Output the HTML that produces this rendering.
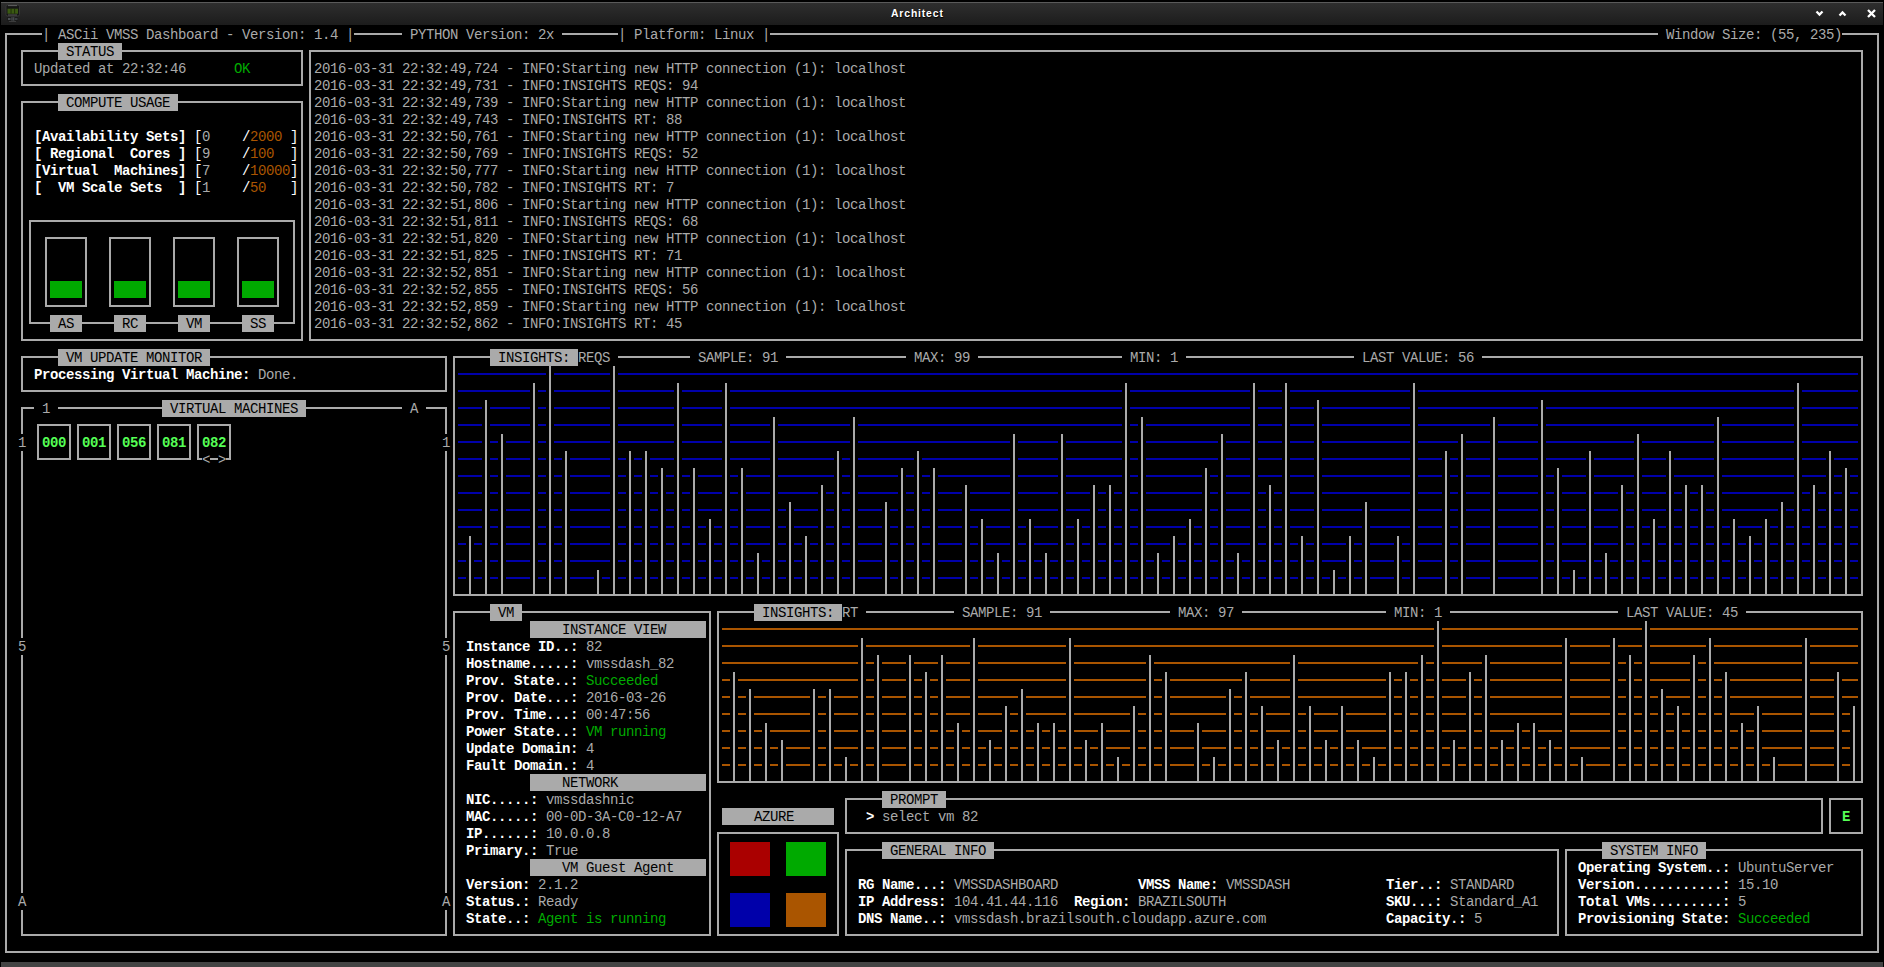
<!DOCTYPE html>
<html><head><meta charset="utf-8"><style>
html,body{margin:0;padding:0;background:#000;width:1884px;height:967px;overflow:hidden;position:relative}
i{position:absolute;display:block}
.b{height:17px}
.t{position:absolute;white-space:pre;font-family:"Liberation Mono",monospace;font-size:14.000px;letter-spacing:-0.4013px;line-height:17px;height:17px}
.b1{font-weight:bold}
#tb{position:absolute;left:1px;top:2px;width:1882px;height:23px;background:linear-gradient(#2f2f2f,#1c1c1c)}
#tbl{position:absolute;left:1px;top:2px;width:1882px;height:1px;background:#5a5a5a}
#ttl{position:absolute;left:891px;top:3px;white-space:pre;font-family:"Liberation Sans",sans-serif;font-weight:bold;font-size:10.4px;letter-spacing:0.85px;color:#ffffff;line-height:22px;text-shadow:0.5px 0.8px 0.8px #000}
#bb{position:absolute;left:1px;top:962px;width:1882px;height:5px;background:#444}
</style></head><body>
<div id="tb"></div><div id="tbl"></div>
<div id="ttl">Architect</div>
<svg style="position:absolute;left:0;top:0" width="1884" height="26">
<rect x="6" y="5" width="13.5" height="11" rx="1.5" fill="#161616" stroke="#3c3c3c" stroke-width="0.8"/>
<rect x="8" y="5.2" width="9" height="0.9" fill="#666"/>
<rect x="7.5" y="8.7" width="10.5" height="5" fill="#3b5a12"/>
<rect x="10.6" y="8.7" width="0.9" height="5" fill="#1d2a0a"/>
<rect x="14.2" y="8.7" width="0.9" height="5" fill="#1d2a0a"/>
<rect x="8" y="14.5" width="9" height="1" fill="#555"/>
<rect x="7" y="17" width="11" height="4" fill="#1a1a1a"/>
<rect x="8" y="18" width="2.5" height="2" fill="#4a4f52"/>
<rect x="11.5" y="17.2" width="1" height="3.5" fill="#5a5f62"/>
<rect x="13.3" y="17.2" width="1" height="3.5" fill="#5a5f62"/>
<rect x="15" y="18" width="2.5" height="2" fill="#3a3f42"/>
<rect x="9" y="21" width="7" height="0.8" fill="#444"/>
<path d="M1816.5 11.5 L1819.5 14.5 L1822.5 11.5" stroke="#fff" stroke-width="2.3" fill="none"/>
<path d="M1839.5 15.5 L1842.5 12.5 L1845.5 15.5" stroke="#fff" stroke-width="2.3" fill="none"/>
<path d="M1868 10 L1875 17 M1875 10 L1868 17" stroke="#fff" stroke-width="2.3" fill="none"/>
</svg>
<i class="b" style="left:58px;top:43px;width:64px;background:#aaaaaa"></i>
<i class="b" style="left:58px;top:94px;width:120px;background:#aaaaaa"></i>
<i class="b" style="left:50px;top:281px;width:32px;background:#00aa00"></i>
<i class="b" style="left:114px;top:281px;width:32px;background:#00aa00"></i>
<i class="b" style="left:178px;top:281px;width:32px;background:#00aa00"></i>
<i class="b" style="left:242px;top:281px;width:32px;background:#00aa00"></i>
<i class="b" style="left:50px;top:315px;width:32px;background:#aaaaaa"></i>
<i class="b" style="left:114px;top:315px;width:32px;background:#aaaaaa"></i>
<i class="b" style="left:178px;top:315px;width:32px;background:#aaaaaa"></i>
<i class="b" style="left:242px;top:315px;width:32px;background:#aaaaaa"></i>
<i class="b" style="left:58px;top:349px;width:152px;background:#aaaaaa"></i>
<i class="b" style="left:490px;top:349px;width:88px;background:#aaaaaa"></i>
<i class="b" style="left:162px;top:400px;width:144px;background:#aaaaaa"></i>
<i class="b" style="left:490px;top:604px;width:32px;background:#aaaaaa"></i>
<i class="b" style="left:754px;top:604px;width:88px;background:#aaaaaa"></i>
<i class="b" style="left:530px;top:621px;width:176px;background:#aaaaaa"></i>
<i class="b" style="left:530px;top:774px;width:176px;background:#aaaaaa"></i>
<i class="b" style="left:882px;top:791px;width:64px;background:#aaaaaa"></i>
<i class="b" style="left:722px;top:808px;width:112px;background:#aaaaaa"></i>
<i class="b" style="left:730px;top:842px;width:40px;background:#aa0000"></i>
<i class="b" style="left:786px;top:842px;width:40px;background:#00aa00"></i>
<i class="b" style="left:882px;top:842px;width:112px;background:#aaaaaa"></i>
<i class="b" style="left:1602px;top:842px;width:104px;background:#aaaaaa"></i>
<i class="b" style="left:530px;top:859px;width:176px;background:#aaaaaa"></i>
<i class="b" style="left:730px;top:859px;width:40px;background:#aa0000"></i>
<i class="b" style="left:786px;top:859px;width:40px;background:#00aa00"></i>
<i class="b" style="left:730px;top:893px;width:40px;background:#0000aa"></i>
<i class="b" style="left:786px;top:893px;width:40px;background:#aa5500"></i>
<i class="b" style="left:730px;top:910px;width:40px;background:#0000aa"></i>
<i class="b" style="left:786px;top:910px;width:40px;background:#aa5500"></i>
<i class="l" style="left:5px;top:33px;width:37px;height:2px;background:#aaaaaa"></i>
<i class="l" style="left:354px;top:33px;width:48px;height:2px;background:#aaaaaa"></i>
<i class="l" style="left:562px;top:33px;width:56px;height:2px;background:#aaaaaa"></i>
<i class="l" style="left:770px;top:33px;width:888px;height:2px;background:#aaaaaa"></i>
<i class="l" style="left:1842px;top:33px;width:37px;height:2px;background:#aaaaaa"></i>
<i class="l" style="left:21px;top:50px;width:37px;height:2px;background:#aaaaaa"></i>
<i class="l" style="left:122px;top:50px;width:181px;height:2px;background:#aaaaaa"></i>
<i class="l" style="left:309px;top:50px;width:1554px;height:2px;background:#aaaaaa"></i>
<i class="l" style="left:21px;top:84px;width:282px;height:2px;background:#aaaaaa"></i>
<i class="l" style="left:21px;top:101px;width:37px;height:2px;background:#aaaaaa"></i>
<i class="l" style="left:178px;top:101px;width:125px;height:2px;background:#aaaaaa"></i>
<i class="l" style="left:29px;top:220px;width:266px;height:2px;background:#aaaaaa"></i>
<i class="l" style="left:45px;top:237px;width:42px;height:2px;background:#aaaaaa"></i>
<i class="l" style="left:109px;top:237px;width:42px;height:2px;background:#aaaaaa"></i>
<i class="l" style="left:173px;top:237px;width:42px;height:2px;background:#aaaaaa"></i>
<i class="l" style="left:237px;top:237px;width:42px;height:2px;background:#aaaaaa"></i>
<i class="l" style="left:45px;top:305px;width:42px;height:2px;background:#aaaaaa"></i>
<i class="l" style="left:109px;top:305px;width:42px;height:2px;background:#aaaaaa"></i>
<i class="l" style="left:173px;top:305px;width:42px;height:2px;background:#aaaaaa"></i>
<i class="l" style="left:237px;top:305px;width:42px;height:2px;background:#aaaaaa"></i>
<i class="l" style="left:29px;top:322px;width:21px;height:2px;background:#aaaaaa"></i>
<i class="l" style="left:82px;top:322px;width:32px;height:2px;background:#aaaaaa"></i>
<i class="l" style="left:146px;top:322px;width:32px;height:2px;background:#aaaaaa"></i>
<i class="l" style="left:210px;top:322px;width:32px;height:2px;background:#aaaaaa"></i>
<i class="l" style="left:274px;top:322px;width:21px;height:2px;background:#aaaaaa"></i>
<i class="l" style="left:21px;top:339px;width:282px;height:2px;background:#aaaaaa"></i>
<i class="l" style="left:309px;top:339px;width:1554px;height:2px;background:#aaaaaa"></i>
<i class="l" style="left:21px;top:356px;width:37px;height:2px;background:#aaaaaa"></i>
<i class="l" style="left:210px;top:356px;width:237px;height:2px;background:#aaaaaa"></i>
<i class="l" style="left:453px;top:356px;width:37px;height:2px;background:#aaaaaa"></i>
<i class="l" style="left:618px;top:356px;width:72px;height:2px;background:#aaaaaa"></i>
<i class="l" style="left:786px;top:356px;width:120px;height:2px;background:#aaaaaa"></i>
<i class="l" style="left:978px;top:356px;width:144px;height:2px;background:#aaaaaa"></i>
<i class="l" style="left:1186px;top:356px;width:168px;height:2px;background:#aaaaaa"></i>
<i class="l" style="left:1482px;top:356px;width:381px;height:2px;background:#aaaaaa"></i>
<i class="l" style="left:458px;top:373px;width:88px;height:2px;background:#0000aa"></i>
<i class="l" style="left:554px;top:373px;width:56px;height:2px;background:#0000aa"></i>
<i class="l" style="left:618px;top:373px;width:1240px;height:2px;background:#0000aa"></i>
<i class="l" style="left:21px;top:390px;width:426px;height:2px;background:#aaaaaa"></i>
<i class="l" style="left:458px;top:390px;width:72px;height:2px;background:#0000aa"></i>
<i class="l" style="left:538px;top:390px;width:8px;height:2px;background:#0000aa"></i>
<i class="l" style="left:554px;top:390px;width:56px;height:2px;background:#0000aa"></i>
<i class="l" style="left:618px;top:390px;width:56px;height:2px;background:#0000aa"></i>
<i class="l" style="left:682px;top:390px;width:40px;height:2px;background:#0000aa"></i>
<i class="l" style="left:730px;top:390px;width:392px;height:2px;background:#0000aa"></i>
<i class="l" style="left:1130px;top:390px;width:120px;height:2px;background:#0000aa"></i>
<i class="l" style="left:1258px;top:390px;width:24px;height:2px;background:#0000aa"></i>
<i class="l" style="left:1290px;top:390px;width:120px;height:2px;background:#0000aa"></i>
<i class="l" style="left:1418px;top:390px;width:376px;height:2px;background:#0000aa"></i>
<i class="l" style="left:1802px;top:390px;width:56px;height:2px;background:#0000aa"></i>
<i class="l" style="left:21px;top:407px;width:13px;height:2px;background:#aaaaaa"></i>
<i class="l" style="left:58px;top:407px;width:104px;height:2px;background:#aaaaaa"></i>
<i class="l" style="left:306px;top:407px;width:96px;height:2px;background:#aaaaaa"></i>
<i class="l" style="left:426px;top:407px;width:21px;height:2px;background:#aaaaaa"></i>
<i class="l" style="left:458px;top:407px;width:24px;height:2px;background:#0000aa"></i>
<i class="l" style="left:490px;top:407px;width:40px;height:2px;background:#0000aa"></i>
<i class="l" style="left:538px;top:407px;width:8px;height:2px;background:#0000aa"></i>
<i class="l" style="left:554px;top:407px;width:56px;height:2px;background:#0000aa"></i>
<i class="l" style="left:618px;top:407px;width:56px;height:2px;background:#0000aa"></i>
<i class="l" style="left:682px;top:407px;width:40px;height:2px;background:#0000aa"></i>
<i class="l" style="left:730px;top:407px;width:392px;height:2px;background:#0000aa"></i>
<i class="l" style="left:1130px;top:407px;width:120px;height:2px;background:#0000aa"></i>
<i class="l" style="left:1258px;top:407px;width:24px;height:2px;background:#0000aa"></i>
<i class="l" style="left:1290px;top:407px;width:24px;height:2px;background:#0000aa"></i>
<i class="l" style="left:1322px;top:407px;width:88px;height:2px;background:#0000aa"></i>
<i class="l" style="left:1418px;top:407px;width:120px;height:2px;background:#0000aa"></i>
<i class="l" style="left:1546px;top:407px;width:248px;height:2px;background:#0000aa"></i>
<i class="l" style="left:1802px;top:407px;width:56px;height:2px;background:#0000aa"></i>
<i class="l" style="left:37px;top:424px;width:34px;height:2px;background:#aaaaaa"></i>
<i class="l" style="left:77px;top:424px;width:34px;height:2px;background:#aaaaaa"></i>
<i class="l" style="left:117px;top:424px;width:34px;height:2px;background:#aaaaaa"></i>
<i class="l" style="left:157px;top:424px;width:34px;height:2px;background:#aaaaaa"></i>
<i class="l" style="left:197px;top:424px;width:34px;height:2px;background:#aaaaaa"></i>
<i class="l" style="left:458px;top:424px;width:24px;height:2px;background:#0000aa"></i>
<i class="l" style="left:490px;top:424px;width:40px;height:2px;background:#0000aa"></i>
<i class="l" style="left:538px;top:424px;width:8px;height:2px;background:#0000aa"></i>
<i class="l" style="left:554px;top:424px;width:56px;height:2px;background:#0000aa"></i>
<i class="l" style="left:618px;top:424px;width:56px;height:2px;background:#0000aa"></i>
<i class="l" style="left:682px;top:424px;width:40px;height:2px;background:#0000aa"></i>
<i class="l" style="left:730px;top:424px;width:40px;height:2px;background:#0000aa"></i>
<i class="l" style="left:778px;top:424px;width:72px;height:2px;background:#0000aa"></i>
<i class="l" style="left:858px;top:424px;width:264px;height:2px;background:#0000aa"></i>
<i class="l" style="left:1130px;top:424px;width:8px;height:2px;background:#0000aa"></i>
<i class="l" style="left:1146px;top:424px;width:104px;height:2px;background:#0000aa"></i>
<i class="l" style="left:1258px;top:424px;width:24px;height:2px;background:#0000aa"></i>
<i class="l" style="left:1290px;top:424px;width:24px;height:2px;background:#0000aa"></i>
<i class="l" style="left:1322px;top:424px;width:88px;height:2px;background:#0000aa"></i>
<i class="l" style="left:1418px;top:424px;width:72px;height:2px;background:#0000aa"></i>
<i class="l" style="left:1498px;top:424px;width:40px;height:2px;background:#0000aa"></i>
<i class="l" style="left:1546px;top:424px;width:168px;height:2px;background:#0000aa"></i>
<i class="l" style="left:1722px;top:424px;width:72px;height:2px;background:#0000aa"></i>
<i class="l" style="left:1802px;top:424px;width:56px;height:2px;background:#0000aa"></i>
<i class="l" style="left:458px;top:441px;width:24px;height:2px;background:#0000aa"></i>
<i class="l" style="left:490px;top:441px;width:8px;height:2px;background:#0000aa"></i>
<i class="l" style="left:506px;top:441px;width:24px;height:2px;background:#0000aa"></i>
<i class="l" style="left:538px;top:441px;width:8px;height:2px;background:#0000aa"></i>
<i class="l" style="left:554px;top:441px;width:56px;height:2px;background:#0000aa"></i>
<i class="l" style="left:618px;top:441px;width:56px;height:2px;background:#0000aa"></i>
<i class="l" style="left:682px;top:441px;width:40px;height:2px;background:#0000aa"></i>
<i class="l" style="left:730px;top:441px;width:40px;height:2px;background:#0000aa"></i>
<i class="l" style="left:778px;top:441px;width:72px;height:2px;background:#0000aa"></i>
<i class="l" style="left:858px;top:441px;width:152px;height:2px;background:#0000aa"></i>
<i class="l" style="left:1018px;top:441px;width:40px;height:2px;background:#0000aa"></i>
<i class="l" style="left:1066px;top:441px;width:56px;height:2px;background:#0000aa"></i>
<i class="l" style="left:1130px;top:441px;width:8px;height:2px;background:#0000aa"></i>
<i class="l" style="left:1146px;top:441px;width:72px;height:2px;background:#0000aa"></i>
<i class="l" style="left:1226px;top:441px;width:24px;height:2px;background:#0000aa"></i>
<i class="l" style="left:1258px;top:441px;width:24px;height:2px;background:#0000aa"></i>
<i class="l" style="left:1290px;top:441px;width:24px;height:2px;background:#0000aa"></i>
<i class="l" style="left:1322px;top:441px;width:88px;height:2px;background:#0000aa"></i>
<i class="l" style="left:1418px;top:441px;width:40px;height:2px;background:#0000aa"></i>
<i class="l" style="left:1466px;top:441px;width:24px;height:2px;background:#0000aa"></i>
<i class="l" style="left:1498px;top:441px;width:40px;height:2px;background:#0000aa"></i>
<i class="l" style="left:1546px;top:441px;width:88px;height:2px;background:#0000aa"></i>
<i class="l" style="left:1642px;top:441px;width:72px;height:2px;background:#0000aa"></i>
<i class="l" style="left:1722px;top:441px;width:72px;height:2px;background:#0000aa"></i>
<i class="l" style="left:1802px;top:441px;width:56px;height:2px;background:#0000aa"></i>
<i class="l" style="left:37px;top:458px;width:34px;height:2px;background:#aaaaaa"></i>
<i class="l" style="left:77px;top:458px;width:34px;height:2px;background:#aaaaaa"></i>
<i class="l" style="left:117px;top:458px;width:34px;height:2px;background:#aaaaaa"></i>
<i class="l" style="left:157px;top:458px;width:34px;height:2px;background:#aaaaaa"></i>
<i class="l" style="left:197px;top:458px;width:5px;height:2px;background:#aaaaaa"></i>
<i class="l" style="left:210px;top:458px;width:8px;height:2px;background:#aaaaaa"></i>
<i class="l" style="left:226px;top:458px;width:5px;height:2px;background:#aaaaaa"></i>
<i class="l" style="left:458px;top:458px;width:24px;height:2px;background:#0000aa"></i>
<i class="l" style="left:490px;top:458px;width:8px;height:2px;background:#0000aa"></i>
<i class="l" style="left:506px;top:458px;width:24px;height:2px;background:#0000aa"></i>
<i class="l" style="left:538px;top:458px;width:8px;height:2px;background:#0000aa"></i>
<i class="l" style="left:554px;top:458px;width:8px;height:2px;background:#0000aa"></i>
<i class="l" style="left:570px;top:458px;width:40px;height:2px;background:#0000aa"></i>
<i class="l" style="left:618px;top:458px;width:8px;height:2px;background:#0000aa"></i>
<i class="l" style="left:634px;top:458px;width:8px;height:2px;background:#0000aa"></i>
<i class="l" style="left:650px;top:458px;width:24px;height:2px;background:#0000aa"></i>
<i class="l" style="left:682px;top:458px;width:40px;height:2px;background:#0000aa"></i>
<i class="l" style="left:730px;top:458px;width:40px;height:2px;background:#0000aa"></i>
<i class="l" style="left:778px;top:458px;width:56px;height:2px;background:#0000aa"></i>
<i class="l" style="left:842px;top:458px;width:8px;height:2px;background:#0000aa"></i>
<i class="l" style="left:858px;top:458px;width:56px;height:2px;background:#0000aa"></i>
<i class="l" style="left:922px;top:458px;width:88px;height:2px;background:#0000aa"></i>
<i class="l" style="left:1018px;top:458px;width:40px;height:2px;background:#0000aa"></i>
<i class="l" style="left:1066px;top:458px;width:56px;height:2px;background:#0000aa"></i>
<i class="l" style="left:1130px;top:458px;width:8px;height:2px;background:#0000aa"></i>
<i class="l" style="left:1146px;top:458px;width:72px;height:2px;background:#0000aa"></i>
<i class="l" style="left:1226px;top:458px;width:24px;height:2px;background:#0000aa"></i>
<i class="l" style="left:1258px;top:458px;width:24px;height:2px;background:#0000aa"></i>
<i class="l" style="left:1290px;top:458px;width:24px;height:2px;background:#0000aa"></i>
<i class="l" style="left:1322px;top:458px;width:88px;height:2px;background:#0000aa"></i>
<i class="l" style="left:1418px;top:458px;width:24px;height:2px;background:#0000aa"></i>
<i class="l" style="left:1450px;top:458px;width:8px;height:2px;background:#0000aa"></i>
<i class="l" style="left:1466px;top:458px;width:24px;height:2px;background:#0000aa"></i>
<i class="l" style="left:1498px;top:458px;width:40px;height:2px;background:#0000aa"></i>
<i class="l" style="left:1546px;top:458px;width:40px;height:2px;background:#0000aa"></i>
<i class="l" style="left:1594px;top:458px;width:40px;height:2px;background:#0000aa"></i>
<i class="l" style="left:1642px;top:458px;width:24px;height:2px;background:#0000aa"></i>
<i class="l" style="left:1674px;top:458px;width:40px;height:2px;background:#0000aa"></i>
<i class="l" style="left:1722px;top:458px;width:72px;height:2px;background:#0000aa"></i>
<i class="l" style="left:1802px;top:458px;width:24px;height:2px;background:#0000aa"></i>
<i class="l" style="left:1834px;top:458px;width:24px;height:2px;background:#0000aa"></i>
<i class="l" style="left:458px;top:475px;width:24px;height:2px;background:#0000aa"></i>
<i class="l" style="left:490px;top:475px;width:8px;height:2px;background:#0000aa"></i>
<i class="l" style="left:506px;top:475px;width:24px;height:2px;background:#0000aa"></i>
<i class="l" style="left:538px;top:475px;width:8px;height:2px;background:#0000aa"></i>
<i class="l" style="left:554px;top:475px;width:8px;height:2px;background:#0000aa"></i>
<i class="l" style="left:570px;top:475px;width:40px;height:2px;background:#0000aa"></i>
<i class="l" style="left:618px;top:475px;width:8px;height:2px;background:#0000aa"></i>
<i class="l" style="left:634px;top:475px;width:8px;height:2px;background:#0000aa"></i>
<i class="l" style="left:650px;top:475px;width:8px;height:2px;background:#0000aa"></i>
<i class="l" style="left:666px;top:475px;width:8px;height:2px;background:#0000aa"></i>
<i class="l" style="left:682px;top:475px;width:8px;height:2px;background:#0000aa"></i>
<i class="l" style="left:698px;top:475px;width:24px;height:2px;background:#0000aa"></i>
<i class="l" style="left:730px;top:475px;width:8px;height:2px;background:#0000aa"></i>
<i class="l" style="left:746px;top:475px;width:24px;height:2px;background:#0000aa"></i>
<i class="l" style="left:778px;top:475px;width:56px;height:2px;background:#0000aa"></i>
<i class="l" style="left:842px;top:475px;width:8px;height:2px;background:#0000aa"></i>
<i class="l" style="left:858px;top:475px;width:40px;height:2px;background:#0000aa"></i>
<i class="l" style="left:906px;top:475px;width:8px;height:2px;background:#0000aa"></i>
<i class="l" style="left:922px;top:475px;width:8px;height:2px;background:#0000aa"></i>
<i class="l" style="left:938px;top:475px;width:72px;height:2px;background:#0000aa"></i>
<i class="l" style="left:1018px;top:475px;width:40px;height:2px;background:#0000aa"></i>
<i class="l" style="left:1066px;top:475px;width:56px;height:2px;background:#0000aa"></i>
<i class="l" style="left:1130px;top:475px;width:8px;height:2px;background:#0000aa"></i>
<i class="l" style="left:1146px;top:475px;width:56px;height:2px;background:#0000aa"></i>
<i class="l" style="left:1210px;top:475px;width:8px;height:2px;background:#0000aa"></i>
<i class="l" style="left:1226px;top:475px;width:24px;height:2px;background:#0000aa"></i>
<i class="l" style="left:1258px;top:475px;width:24px;height:2px;background:#0000aa"></i>
<i class="l" style="left:1290px;top:475px;width:24px;height:2px;background:#0000aa"></i>
<i class="l" style="left:1322px;top:475px;width:88px;height:2px;background:#0000aa"></i>
<i class="l" style="left:1418px;top:475px;width:24px;height:2px;background:#0000aa"></i>
<i class="l" style="left:1450px;top:475px;width:8px;height:2px;background:#0000aa"></i>
<i class="l" style="left:1466px;top:475px;width:24px;height:2px;background:#0000aa"></i>
<i class="l" style="left:1498px;top:475px;width:40px;height:2px;background:#0000aa"></i>
<i class="l" style="left:1546px;top:475px;width:8px;height:2px;background:#0000aa"></i>
<i class="l" style="left:1562px;top:475px;width:24px;height:2px;background:#0000aa"></i>
<i class="l" style="left:1594px;top:475px;width:40px;height:2px;background:#0000aa"></i>
<i class="l" style="left:1642px;top:475px;width:24px;height:2px;background:#0000aa"></i>
<i class="l" style="left:1674px;top:475px;width:40px;height:2px;background:#0000aa"></i>
<i class="l" style="left:1722px;top:475px;width:72px;height:2px;background:#0000aa"></i>
<i class="l" style="left:1802px;top:475px;width:24px;height:2px;background:#0000aa"></i>
<i class="l" style="left:1834px;top:475px;width:8px;height:2px;background:#0000aa"></i>
<i class="l" style="left:1850px;top:475px;width:8px;height:2px;background:#0000aa"></i>
<i class="l" style="left:458px;top:492px;width:24px;height:2px;background:#0000aa"></i>
<i class="l" style="left:490px;top:492px;width:8px;height:2px;background:#0000aa"></i>
<i class="l" style="left:506px;top:492px;width:24px;height:2px;background:#0000aa"></i>
<i class="l" style="left:538px;top:492px;width:8px;height:2px;background:#0000aa"></i>
<i class="l" style="left:554px;top:492px;width:8px;height:2px;background:#0000aa"></i>
<i class="l" style="left:570px;top:492px;width:40px;height:2px;background:#0000aa"></i>
<i class="l" style="left:618px;top:492px;width:8px;height:2px;background:#0000aa"></i>
<i class="l" style="left:634px;top:492px;width:8px;height:2px;background:#0000aa"></i>
<i class="l" style="left:650px;top:492px;width:8px;height:2px;background:#0000aa"></i>
<i class="l" style="left:666px;top:492px;width:8px;height:2px;background:#0000aa"></i>
<i class="l" style="left:682px;top:492px;width:8px;height:2px;background:#0000aa"></i>
<i class="l" style="left:698px;top:492px;width:24px;height:2px;background:#0000aa"></i>
<i class="l" style="left:730px;top:492px;width:8px;height:2px;background:#0000aa"></i>
<i class="l" style="left:746px;top:492px;width:24px;height:2px;background:#0000aa"></i>
<i class="l" style="left:778px;top:492px;width:40px;height:2px;background:#0000aa"></i>
<i class="l" style="left:826px;top:492px;width:8px;height:2px;background:#0000aa"></i>
<i class="l" style="left:842px;top:492px;width:8px;height:2px;background:#0000aa"></i>
<i class="l" style="left:858px;top:492px;width:40px;height:2px;background:#0000aa"></i>
<i class="l" style="left:906px;top:492px;width:8px;height:2px;background:#0000aa"></i>
<i class="l" style="left:922px;top:492px;width:8px;height:2px;background:#0000aa"></i>
<i class="l" style="left:938px;top:492px;width:24px;height:2px;background:#0000aa"></i>
<i class="l" style="left:970px;top:492px;width:40px;height:2px;background:#0000aa"></i>
<i class="l" style="left:1018px;top:492px;width:40px;height:2px;background:#0000aa"></i>
<i class="l" style="left:1066px;top:492px;width:24px;height:2px;background:#0000aa"></i>
<i class="l" style="left:1098px;top:492px;width:8px;height:2px;background:#0000aa"></i>
<i class="l" style="left:1114px;top:492px;width:8px;height:2px;background:#0000aa"></i>
<i class="l" style="left:1130px;top:492px;width:8px;height:2px;background:#0000aa"></i>
<i class="l" style="left:1146px;top:492px;width:56px;height:2px;background:#0000aa"></i>
<i class="l" style="left:1210px;top:492px;width:8px;height:2px;background:#0000aa"></i>
<i class="l" style="left:1226px;top:492px;width:24px;height:2px;background:#0000aa"></i>
<i class="l" style="left:1258px;top:492px;width:8px;height:2px;background:#0000aa"></i>
<i class="l" style="left:1274px;top:492px;width:8px;height:2px;background:#0000aa"></i>
<i class="l" style="left:1290px;top:492px;width:24px;height:2px;background:#0000aa"></i>
<i class="l" style="left:1322px;top:492px;width:88px;height:2px;background:#0000aa"></i>
<i class="l" style="left:1418px;top:492px;width:24px;height:2px;background:#0000aa"></i>
<i class="l" style="left:1450px;top:492px;width:8px;height:2px;background:#0000aa"></i>
<i class="l" style="left:1466px;top:492px;width:24px;height:2px;background:#0000aa"></i>
<i class="l" style="left:1498px;top:492px;width:40px;height:2px;background:#0000aa"></i>
<i class="l" style="left:1546px;top:492px;width:8px;height:2px;background:#0000aa"></i>
<i class="l" style="left:1562px;top:492px;width:24px;height:2px;background:#0000aa"></i>
<i class="l" style="left:1594px;top:492px;width:24px;height:2px;background:#0000aa"></i>
<i class="l" style="left:1626px;top:492px;width:8px;height:2px;background:#0000aa"></i>
<i class="l" style="left:1642px;top:492px;width:24px;height:2px;background:#0000aa"></i>
<i class="l" style="left:1674px;top:492px;width:8px;height:2px;background:#0000aa"></i>
<i class="l" style="left:1690px;top:492px;width:8px;height:2px;background:#0000aa"></i>
<i class="l" style="left:1706px;top:492px;width:8px;height:2px;background:#0000aa"></i>
<i class="l" style="left:1722px;top:492px;width:72px;height:2px;background:#0000aa"></i>
<i class="l" style="left:1802px;top:492px;width:8px;height:2px;background:#0000aa"></i>
<i class="l" style="left:1818px;top:492px;width:8px;height:2px;background:#0000aa"></i>
<i class="l" style="left:1834px;top:492px;width:8px;height:2px;background:#0000aa"></i>
<i class="l" style="left:1850px;top:492px;width:8px;height:2px;background:#0000aa"></i>
<i class="l" style="left:458px;top:509px;width:24px;height:2px;background:#0000aa"></i>
<i class="l" style="left:490px;top:509px;width:8px;height:2px;background:#0000aa"></i>
<i class="l" style="left:506px;top:509px;width:24px;height:2px;background:#0000aa"></i>
<i class="l" style="left:538px;top:509px;width:8px;height:2px;background:#0000aa"></i>
<i class="l" style="left:554px;top:509px;width:8px;height:2px;background:#0000aa"></i>
<i class="l" style="left:570px;top:509px;width:40px;height:2px;background:#0000aa"></i>
<i class="l" style="left:618px;top:509px;width:8px;height:2px;background:#0000aa"></i>
<i class="l" style="left:634px;top:509px;width:8px;height:2px;background:#0000aa"></i>
<i class="l" style="left:650px;top:509px;width:8px;height:2px;background:#0000aa"></i>
<i class="l" style="left:666px;top:509px;width:8px;height:2px;background:#0000aa"></i>
<i class="l" style="left:682px;top:509px;width:8px;height:2px;background:#0000aa"></i>
<i class="l" style="left:698px;top:509px;width:24px;height:2px;background:#0000aa"></i>
<i class="l" style="left:730px;top:509px;width:8px;height:2px;background:#0000aa"></i>
<i class="l" style="left:746px;top:509px;width:24px;height:2px;background:#0000aa"></i>
<i class="l" style="left:778px;top:509px;width:8px;height:2px;background:#0000aa"></i>
<i class="l" style="left:794px;top:509px;width:24px;height:2px;background:#0000aa"></i>
<i class="l" style="left:826px;top:509px;width:8px;height:2px;background:#0000aa"></i>
<i class="l" style="left:842px;top:509px;width:8px;height:2px;background:#0000aa"></i>
<i class="l" style="left:858px;top:509px;width:24px;height:2px;background:#0000aa"></i>
<i class="l" style="left:890px;top:509px;width:8px;height:2px;background:#0000aa"></i>
<i class="l" style="left:906px;top:509px;width:8px;height:2px;background:#0000aa"></i>
<i class="l" style="left:922px;top:509px;width:8px;height:2px;background:#0000aa"></i>
<i class="l" style="left:938px;top:509px;width:24px;height:2px;background:#0000aa"></i>
<i class="l" style="left:970px;top:509px;width:40px;height:2px;background:#0000aa"></i>
<i class="l" style="left:1018px;top:509px;width:40px;height:2px;background:#0000aa"></i>
<i class="l" style="left:1066px;top:509px;width:24px;height:2px;background:#0000aa"></i>
<i class="l" style="left:1098px;top:509px;width:8px;height:2px;background:#0000aa"></i>
<i class="l" style="left:1114px;top:509px;width:8px;height:2px;background:#0000aa"></i>
<i class="l" style="left:1130px;top:509px;width:8px;height:2px;background:#0000aa"></i>
<i class="l" style="left:1146px;top:509px;width:56px;height:2px;background:#0000aa"></i>
<i class="l" style="left:1210px;top:509px;width:8px;height:2px;background:#0000aa"></i>
<i class="l" style="left:1226px;top:509px;width:24px;height:2px;background:#0000aa"></i>
<i class="l" style="left:1258px;top:509px;width:8px;height:2px;background:#0000aa"></i>
<i class="l" style="left:1274px;top:509px;width:8px;height:2px;background:#0000aa"></i>
<i class="l" style="left:1290px;top:509px;width:24px;height:2px;background:#0000aa"></i>
<i class="l" style="left:1322px;top:509px;width:40px;height:2px;background:#0000aa"></i>
<i class="l" style="left:1370px;top:509px;width:40px;height:2px;background:#0000aa"></i>
<i class="l" style="left:1418px;top:509px;width:24px;height:2px;background:#0000aa"></i>
<i class="l" style="left:1450px;top:509px;width:8px;height:2px;background:#0000aa"></i>
<i class="l" style="left:1466px;top:509px;width:24px;height:2px;background:#0000aa"></i>
<i class="l" style="left:1498px;top:509px;width:40px;height:2px;background:#0000aa"></i>
<i class="l" style="left:1546px;top:509px;width:8px;height:2px;background:#0000aa"></i>
<i class="l" style="left:1562px;top:509px;width:24px;height:2px;background:#0000aa"></i>
<i class="l" style="left:1594px;top:509px;width:24px;height:2px;background:#0000aa"></i>
<i class="l" style="left:1626px;top:509px;width:8px;height:2px;background:#0000aa"></i>
<i class="l" style="left:1642px;top:509px;width:24px;height:2px;background:#0000aa"></i>
<i class="l" style="left:1674px;top:509px;width:8px;height:2px;background:#0000aa"></i>
<i class="l" style="left:1690px;top:509px;width:8px;height:2px;background:#0000aa"></i>
<i class="l" style="left:1706px;top:509px;width:8px;height:2px;background:#0000aa"></i>
<i class="l" style="left:1722px;top:509px;width:56px;height:2px;background:#0000aa"></i>
<i class="l" style="left:1786px;top:509px;width:8px;height:2px;background:#0000aa"></i>
<i class="l" style="left:1802px;top:509px;width:8px;height:2px;background:#0000aa"></i>
<i class="l" style="left:1818px;top:509px;width:8px;height:2px;background:#0000aa"></i>
<i class="l" style="left:1834px;top:509px;width:8px;height:2px;background:#0000aa"></i>
<i class="l" style="left:1850px;top:509px;width:8px;height:2px;background:#0000aa"></i>
<i class="l" style="left:458px;top:526px;width:24px;height:2px;background:#0000aa"></i>
<i class="l" style="left:490px;top:526px;width:8px;height:2px;background:#0000aa"></i>
<i class="l" style="left:506px;top:526px;width:24px;height:2px;background:#0000aa"></i>
<i class="l" style="left:538px;top:526px;width:8px;height:2px;background:#0000aa"></i>
<i class="l" style="left:554px;top:526px;width:8px;height:2px;background:#0000aa"></i>
<i class="l" style="left:570px;top:526px;width:40px;height:2px;background:#0000aa"></i>
<i class="l" style="left:618px;top:526px;width:8px;height:2px;background:#0000aa"></i>
<i class="l" style="left:634px;top:526px;width:8px;height:2px;background:#0000aa"></i>
<i class="l" style="left:650px;top:526px;width:8px;height:2px;background:#0000aa"></i>
<i class="l" style="left:666px;top:526px;width:8px;height:2px;background:#0000aa"></i>
<i class="l" style="left:682px;top:526px;width:8px;height:2px;background:#0000aa"></i>
<i class="l" style="left:698px;top:526px;width:8px;height:2px;background:#0000aa"></i>
<i class="l" style="left:714px;top:526px;width:8px;height:2px;background:#0000aa"></i>
<i class="l" style="left:730px;top:526px;width:8px;height:2px;background:#0000aa"></i>
<i class="l" style="left:746px;top:526px;width:24px;height:2px;background:#0000aa"></i>
<i class="l" style="left:778px;top:526px;width:8px;height:2px;background:#0000aa"></i>
<i class="l" style="left:794px;top:526px;width:24px;height:2px;background:#0000aa"></i>
<i class="l" style="left:826px;top:526px;width:8px;height:2px;background:#0000aa"></i>
<i class="l" style="left:842px;top:526px;width:8px;height:2px;background:#0000aa"></i>
<i class="l" style="left:858px;top:526px;width:24px;height:2px;background:#0000aa"></i>
<i class="l" style="left:890px;top:526px;width:8px;height:2px;background:#0000aa"></i>
<i class="l" style="left:906px;top:526px;width:8px;height:2px;background:#0000aa"></i>
<i class="l" style="left:922px;top:526px;width:8px;height:2px;background:#0000aa"></i>
<i class="l" style="left:938px;top:526px;width:24px;height:2px;background:#0000aa"></i>
<i class="l" style="left:970px;top:526px;width:8px;height:2px;background:#0000aa"></i>
<i class="l" style="left:986px;top:526px;width:24px;height:2px;background:#0000aa"></i>
<i class="l" style="left:1018px;top:526px;width:8px;height:2px;background:#0000aa"></i>
<i class="l" style="left:1034px;top:526px;width:24px;height:2px;background:#0000aa"></i>
<i class="l" style="left:1066px;top:526px;width:8px;height:2px;background:#0000aa"></i>
<i class="l" style="left:1082px;top:526px;width:8px;height:2px;background:#0000aa"></i>
<i class="l" style="left:1098px;top:526px;width:8px;height:2px;background:#0000aa"></i>
<i class="l" style="left:1114px;top:526px;width:8px;height:2px;background:#0000aa"></i>
<i class="l" style="left:1130px;top:526px;width:8px;height:2px;background:#0000aa"></i>
<i class="l" style="left:1146px;top:526px;width:40px;height:2px;background:#0000aa"></i>
<i class="l" style="left:1194px;top:526px;width:8px;height:2px;background:#0000aa"></i>
<i class="l" style="left:1210px;top:526px;width:8px;height:2px;background:#0000aa"></i>
<i class="l" style="left:1226px;top:526px;width:24px;height:2px;background:#0000aa"></i>
<i class="l" style="left:1258px;top:526px;width:8px;height:2px;background:#0000aa"></i>
<i class="l" style="left:1274px;top:526px;width:8px;height:2px;background:#0000aa"></i>
<i class="l" style="left:1290px;top:526px;width:24px;height:2px;background:#0000aa"></i>
<i class="l" style="left:1322px;top:526px;width:40px;height:2px;background:#0000aa"></i>
<i class="l" style="left:1370px;top:526px;width:40px;height:2px;background:#0000aa"></i>
<i class="l" style="left:1418px;top:526px;width:24px;height:2px;background:#0000aa"></i>
<i class="l" style="left:1450px;top:526px;width:8px;height:2px;background:#0000aa"></i>
<i class="l" style="left:1466px;top:526px;width:24px;height:2px;background:#0000aa"></i>
<i class="l" style="left:1498px;top:526px;width:40px;height:2px;background:#0000aa"></i>
<i class="l" style="left:1546px;top:526px;width:8px;height:2px;background:#0000aa"></i>
<i class="l" style="left:1562px;top:526px;width:24px;height:2px;background:#0000aa"></i>
<i class="l" style="left:1594px;top:526px;width:24px;height:2px;background:#0000aa"></i>
<i class="l" style="left:1626px;top:526px;width:8px;height:2px;background:#0000aa"></i>
<i class="l" style="left:1642px;top:526px;width:8px;height:2px;background:#0000aa"></i>
<i class="l" style="left:1658px;top:526px;width:8px;height:2px;background:#0000aa"></i>
<i class="l" style="left:1674px;top:526px;width:8px;height:2px;background:#0000aa"></i>
<i class="l" style="left:1690px;top:526px;width:8px;height:2px;background:#0000aa"></i>
<i class="l" style="left:1706px;top:526px;width:8px;height:2px;background:#0000aa"></i>
<i class="l" style="left:1722px;top:526px;width:8px;height:2px;background:#0000aa"></i>
<i class="l" style="left:1738px;top:526px;width:24px;height:2px;background:#0000aa"></i>
<i class="l" style="left:1770px;top:526px;width:8px;height:2px;background:#0000aa"></i>
<i class="l" style="left:1786px;top:526px;width:8px;height:2px;background:#0000aa"></i>
<i class="l" style="left:1802px;top:526px;width:8px;height:2px;background:#0000aa"></i>
<i class="l" style="left:1818px;top:526px;width:8px;height:2px;background:#0000aa"></i>
<i class="l" style="left:1834px;top:526px;width:8px;height:2px;background:#0000aa"></i>
<i class="l" style="left:1850px;top:526px;width:8px;height:2px;background:#0000aa"></i>
<i class="l" style="left:458px;top:543px;width:8px;height:2px;background:#0000aa"></i>
<i class="l" style="left:474px;top:543px;width:8px;height:2px;background:#0000aa"></i>
<i class="l" style="left:490px;top:543px;width:8px;height:2px;background:#0000aa"></i>
<i class="l" style="left:506px;top:543px;width:24px;height:2px;background:#0000aa"></i>
<i class="l" style="left:538px;top:543px;width:8px;height:2px;background:#0000aa"></i>
<i class="l" style="left:554px;top:543px;width:8px;height:2px;background:#0000aa"></i>
<i class="l" style="left:570px;top:543px;width:40px;height:2px;background:#0000aa"></i>
<i class="l" style="left:618px;top:543px;width:8px;height:2px;background:#0000aa"></i>
<i class="l" style="left:634px;top:543px;width:8px;height:2px;background:#0000aa"></i>
<i class="l" style="left:650px;top:543px;width:8px;height:2px;background:#0000aa"></i>
<i class="l" style="left:666px;top:543px;width:8px;height:2px;background:#0000aa"></i>
<i class="l" style="left:682px;top:543px;width:8px;height:2px;background:#0000aa"></i>
<i class="l" style="left:698px;top:543px;width:8px;height:2px;background:#0000aa"></i>
<i class="l" style="left:714px;top:543px;width:8px;height:2px;background:#0000aa"></i>
<i class="l" style="left:730px;top:543px;width:8px;height:2px;background:#0000aa"></i>
<i class="l" style="left:746px;top:543px;width:24px;height:2px;background:#0000aa"></i>
<i class="l" style="left:778px;top:543px;width:8px;height:2px;background:#0000aa"></i>
<i class="l" style="left:794px;top:543px;width:8px;height:2px;background:#0000aa"></i>
<i class="l" style="left:810px;top:543px;width:8px;height:2px;background:#0000aa"></i>
<i class="l" style="left:826px;top:543px;width:8px;height:2px;background:#0000aa"></i>
<i class="l" style="left:842px;top:543px;width:8px;height:2px;background:#0000aa"></i>
<i class="l" style="left:858px;top:543px;width:24px;height:2px;background:#0000aa"></i>
<i class="l" style="left:890px;top:543px;width:8px;height:2px;background:#0000aa"></i>
<i class="l" style="left:906px;top:543px;width:8px;height:2px;background:#0000aa"></i>
<i class="l" style="left:922px;top:543px;width:8px;height:2px;background:#0000aa"></i>
<i class="l" style="left:938px;top:543px;width:24px;height:2px;background:#0000aa"></i>
<i class="l" style="left:970px;top:543px;width:8px;height:2px;background:#0000aa"></i>
<i class="l" style="left:986px;top:543px;width:24px;height:2px;background:#0000aa"></i>
<i class="l" style="left:1018px;top:543px;width:8px;height:2px;background:#0000aa"></i>
<i class="l" style="left:1034px;top:543px;width:24px;height:2px;background:#0000aa"></i>
<i class="l" style="left:1066px;top:543px;width:8px;height:2px;background:#0000aa"></i>
<i class="l" style="left:1082px;top:543px;width:8px;height:2px;background:#0000aa"></i>
<i class="l" style="left:1098px;top:543px;width:8px;height:2px;background:#0000aa"></i>
<i class="l" style="left:1114px;top:543px;width:8px;height:2px;background:#0000aa"></i>
<i class="l" style="left:1130px;top:543px;width:8px;height:2px;background:#0000aa"></i>
<i class="l" style="left:1146px;top:543px;width:24px;height:2px;background:#0000aa"></i>
<i class="l" style="left:1178px;top:543px;width:8px;height:2px;background:#0000aa"></i>
<i class="l" style="left:1194px;top:543px;width:8px;height:2px;background:#0000aa"></i>
<i class="l" style="left:1210px;top:543px;width:8px;height:2px;background:#0000aa"></i>
<i class="l" style="left:1226px;top:543px;width:24px;height:2px;background:#0000aa"></i>
<i class="l" style="left:1258px;top:543px;width:8px;height:2px;background:#0000aa"></i>
<i class="l" style="left:1274px;top:543px;width:8px;height:2px;background:#0000aa"></i>
<i class="l" style="left:1290px;top:543px;width:8px;height:2px;background:#0000aa"></i>
<i class="l" style="left:1306px;top:543px;width:8px;height:2px;background:#0000aa"></i>
<i class="l" style="left:1322px;top:543px;width:24px;height:2px;background:#0000aa"></i>
<i class="l" style="left:1354px;top:543px;width:8px;height:2px;background:#0000aa"></i>
<i class="l" style="left:1370px;top:543px;width:24px;height:2px;background:#0000aa"></i>
<i class="l" style="left:1402px;top:543px;width:8px;height:2px;background:#0000aa"></i>
<i class="l" style="left:1418px;top:543px;width:24px;height:2px;background:#0000aa"></i>
<i class="l" style="left:1450px;top:543px;width:8px;height:2px;background:#0000aa"></i>
<i class="l" style="left:1466px;top:543px;width:24px;height:2px;background:#0000aa"></i>
<i class="l" style="left:1498px;top:543px;width:40px;height:2px;background:#0000aa"></i>
<i class="l" style="left:1546px;top:543px;width:8px;height:2px;background:#0000aa"></i>
<i class="l" style="left:1562px;top:543px;width:24px;height:2px;background:#0000aa"></i>
<i class="l" style="left:1594px;top:543px;width:24px;height:2px;background:#0000aa"></i>
<i class="l" style="left:1626px;top:543px;width:8px;height:2px;background:#0000aa"></i>
<i class="l" style="left:1642px;top:543px;width:8px;height:2px;background:#0000aa"></i>
<i class="l" style="left:1658px;top:543px;width:8px;height:2px;background:#0000aa"></i>
<i class="l" style="left:1674px;top:543px;width:8px;height:2px;background:#0000aa"></i>
<i class="l" style="left:1690px;top:543px;width:8px;height:2px;background:#0000aa"></i>
<i class="l" style="left:1706px;top:543px;width:8px;height:2px;background:#0000aa"></i>
<i class="l" style="left:1722px;top:543px;width:8px;height:2px;background:#0000aa"></i>
<i class="l" style="left:1738px;top:543px;width:8px;height:2px;background:#0000aa"></i>
<i class="l" style="left:1754px;top:543px;width:8px;height:2px;background:#0000aa"></i>
<i class="l" style="left:1770px;top:543px;width:8px;height:2px;background:#0000aa"></i>
<i class="l" style="left:1786px;top:543px;width:8px;height:2px;background:#0000aa"></i>
<i class="l" style="left:1802px;top:543px;width:8px;height:2px;background:#0000aa"></i>
<i class="l" style="left:1818px;top:543px;width:8px;height:2px;background:#0000aa"></i>
<i class="l" style="left:1834px;top:543px;width:8px;height:2px;background:#0000aa"></i>
<i class="l" style="left:1850px;top:543px;width:8px;height:2px;background:#0000aa"></i>
<i class="l" style="left:458px;top:560px;width:8px;height:2px;background:#0000aa"></i>
<i class="l" style="left:474px;top:560px;width:8px;height:2px;background:#0000aa"></i>
<i class="l" style="left:490px;top:560px;width:8px;height:2px;background:#0000aa"></i>
<i class="l" style="left:506px;top:560px;width:24px;height:2px;background:#0000aa"></i>
<i class="l" style="left:538px;top:560px;width:8px;height:2px;background:#0000aa"></i>
<i class="l" style="left:554px;top:560px;width:8px;height:2px;background:#0000aa"></i>
<i class="l" style="left:570px;top:560px;width:40px;height:2px;background:#0000aa"></i>
<i class="l" style="left:618px;top:560px;width:8px;height:2px;background:#0000aa"></i>
<i class="l" style="left:634px;top:560px;width:8px;height:2px;background:#0000aa"></i>
<i class="l" style="left:650px;top:560px;width:8px;height:2px;background:#0000aa"></i>
<i class="l" style="left:666px;top:560px;width:8px;height:2px;background:#0000aa"></i>
<i class="l" style="left:682px;top:560px;width:8px;height:2px;background:#0000aa"></i>
<i class="l" style="left:698px;top:560px;width:8px;height:2px;background:#0000aa"></i>
<i class="l" style="left:714px;top:560px;width:8px;height:2px;background:#0000aa"></i>
<i class="l" style="left:730px;top:560px;width:8px;height:2px;background:#0000aa"></i>
<i class="l" style="left:746px;top:560px;width:8px;height:2px;background:#0000aa"></i>
<i class="l" style="left:762px;top:560px;width:8px;height:2px;background:#0000aa"></i>
<i class="l" style="left:778px;top:560px;width:8px;height:2px;background:#0000aa"></i>
<i class="l" style="left:794px;top:560px;width:8px;height:2px;background:#0000aa"></i>
<i class="l" style="left:810px;top:560px;width:8px;height:2px;background:#0000aa"></i>
<i class="l" style="left:826px;top:560px;width:8px;height:2px;background:#0000aa"></i>
<i class="l" style="left:842px;top:560px;width:8px;height:2px;background:#0000aa"></i>
<i class="l" style="left:858px;top:560px;width:24px;height:2px;background:#0000aa"></i>
<i class="l" style="left:890px;top:560px;width:8px;height:2px;background:#0000aa"></i>
<i class="l" style="left:906px;top:560px;width:8px;height:2px;background:#0000aa"></i>
<i class="l" style="left:922px;top:560px;width:8px;height:2px;background:#0000aa"></i>
<i class="l" style="left:938px;top:560px;width:24px;height:2px;background:#0000aa"></i>
<i class="l" style="left:970px;top:560px;width:8px;height:2px;background:#0000aa"></i>
<i class="l" style="left:986px;top:560px;width:8px;height:2px;background:#0000aa"></i>
<i class="l" style="left:1002px;top:560px;width:8px;height:2px;background:#0000aa"></i>
<i class="l" style="left:1018px;top:560px;width:8px;height:2px;background:#0000aa"></i>
<i class="l" style="left:1034px;top:560px;width:8px;height:2px;background:#0000aa"></i>
<i class="l" style="left:1050px;top:560px;width:8px;height:2px;background:#0000aa"></i>
<i class="l" style="left:1066px;top:560px;width:8px;height:2px;background:#0000aa"></i>
<i class="l" style="left:1082px;top:560px;width:8px;height:2px;background:#0000aa"></i>
<i class="l" style="left:1098px;top:560px;width:8px;height:2px;background:#0000aa"></i>
<i class="l" style="left:1114px;top:560px;width:8px;height:2px;background:#0000aa"></i>
<i class="l" style="left:1130px;top:560px;width:8px;height:2px;background:#0000aa"></i>
<i class="l" style="left:1146px;top:560px;width:8px;height:2px;background:#0000aa"></i>
<i class="l" style="left:1162px;top:560px;width:8px;height:2px;background:#0000aa"></i>
<i class="l" style="left:1178px;top:560px;width:8px;height:2px;background:#0000aa"></i>
<i class="l" style="left:1194px;top:560px;width:8px;height:2px;background:#0000aa"></i>
<i class="l" style="left:1210px;top:560px;width:8px;height:2px;background:#0000aa"></i>
<i class="l" style="left:1226px;top:560px;width:8px;height:2px;background:#0000aa"></i>
<i class="l" style="left:1242px;top:560px;width:8px;height:2px;background:#0000aa"></i>
<i class="l" style="left:1258px;top:560px;width:8px;height:2px;background:#0000aa"></i>
<i class="l" style="left:1274px;top:560px;width:8px;height:2px;background:#0000aa"></i>
<i class="l" style="left:1290px;top:560px;width:8px;height:2px;background:#0000aa"></i>
<i class="l" style="left:1306px;top:560px;width:8px;height:2px;background:#0000aa"></i>
<i class="l" style="left:1322px;top:560px;width:24px;height:2px;background:#0000aa"></i>
<i class="l" style="left:1354px;top:560px;width:8px;height:2px;background:#0000aa"></i>
<i class="l" style="left:1370px;top:560px;width:24px;height:2px;background:#0000aa"></i>
<i class="l" style="left:1402px;top:560px;width:8px;height:2px;background:#0000aa"></i>
<i class="l" style="left:1418px;top:560px;width:24px;height:2px;background:#0000aa"></i>
<i class="l" style="left:1450px;top:560px;width:8px;height:2px;background:#0000aa"></i>
<i class="l" style="left:1466px;top:560px;width:24px;height:2px;background:#0000aa"></i>
<i class="l" style="left:1498px;top:560px;width:40px;height:2px;background:#0000aa"></i>
<i class="l" style="left:1546px;top:560px;width:8px;height:2px;background:#0000aa"></i>
<i class="l" style="left:1562px;top:560px;width:24px;height:2px;background:#0000aa"></i>
<i class="l" style="left:1594px;top:560px;width:8px;height:2px;background:#0000aa"></i>
<i class="l" style="left:1610px;top:560px;width:8px;height:2px;background:#0000aa"></i>
<i class="l" style="left:1626px;top:560px;width:8px;height:2px;background:#0000aa"></i>
<i class="l" style="left:1642px;top:560px;width:8px;height:2px;background:#0000aa"></i>
<i class="l" style="left:1658px;top:560px;width:8px;height:2px;background:#0000aa"></i>
<i class="l" style="left:1674px;top:560px;width:8px;height:2px;background:#0000aa"></i>
<i class="l" style="left:1690px;top:560px;width:8px;height:2px;background:#0000aa"></i>
<i class="l" style="left:1706px;top:560px;width:8px;height:2px;background:#0000aa"></i>
<i class="l" style="left:1722px;top:560px;width:8px;height:2px;background:#0000aa"></i>
<i class="l" style="left:1738px;top:560px;width:8px;height:2px;background:#0000aa"></i>
<i class="l" style="left:1754px;top:560px;width:8px;height:2px;background:#0000aa"></i>
<i class="l" style="left:1770px;top:560px;width:8px;height:2px;background:#0000aa"></i>
<i class="l" style="left:1786px;top:560px;width:8px;height:2px;background:#0000aa"></i>
<i class="l" style="left:1802px;top:560px;width:8px;height:2px;background:#0000aa"></i>
<i class="l" style="left:1818px;top:560px;width:8px;height:2px;background:#0000aa"></i>
<i class="l" style="left:1834px;top:560px;width:8px;height:2px;background:#0000aa"></i>
<i class="l" style="left:1850px;top:560px;width:8px;height:2px;background:#0000aa"></i>
<i class="l" style="left:458px;top:577px;width:8px;height:2px;background:#0000aa"></i>
<i class="l" style="left:474px;top:577px;width:8px;height:2px;background:#0000aa"></i>
<i class="l" style="left:490px;top:577px;width:8px;height:2px;background:#0000aa"></i>
<i class="l" style="left:506px;top:577px;width:24px;height:2px;background:#0000aa"></i>
<i class="l" style="left:538px;top:577px;width:8px;height:2px;background:#0000aa"></i>
<i class="l" style="left:554px;top:577px;width:8px;height:2px;background:#0000aa"></i>
<i class="l" style="left:570px;top:577px;width:24px;height:2px;background:#0000aa"></i>
<i class="l" style="left:602px;top:577px;width:8px;height:2px;background:#0000aa"></i>
<i class="l" style="left:618px;top:577px;width:8px;height:2px;background:#0000aa"></i>
<i class="l" style="left:634px;top:577px;width:8px;height:2px;background:#0000aa"></i>
<i class="l" style="left:650px;top:577px;width:8px;height:2px;background:#0000aa"></i>
<i class="l" style="left:666px;top:577px;width:8px;height:2px;background:#0000aa"></i>
<i class="l" style="left:682px;top:577px;width:8px;height:2px;background:#0000aa"></i>
<i class="l" style="left:698px;top:577px;width:8px;height:2px;background:#0000aa"></i>
<i class="l" style="left:714px;top:577px;width:8px;height:2px;background:#0000aa"></i>
<i class="l" style="left:730px;top:577px;width:8px;height:2px;background:#0000aa"></i>
<i class="l" style="left:746px;top:577px;width:8px;height:2px;background:#0000aa"></i>
<i class="l" style="left:762px;top:577px;width:8px;height:2px;background:#0000aa"></i>
<i class="l" style="left:778px;top:577px;width:8px;height:2px;background:#0000aa"></i>
<i class="l" style="left:794px;top:577px;width:8px;height:2px;background:#0000aa"></i>
<i class="l" style="left:810px;top:577px;width:8px;height:2px;background:#0000aa"></i>
<i class="l" style="left:826px;top:577px;width:8px;height:2px;background:#0000aa"></i>
<i class="l" style="left:842px;top:577px;width:8px;height:2px;background:#0000aa"></i>
<i class="l" style="left:858px;top:577px;width:24px;height:2px;background:#0000aa"></i>
<i class="l" style="left:890px;top:577px;width:8px;height:2px;background:#0000aa"></i>
<i class="l" style="left:906px;top:577px;width:8px;height:2px;background:#0000aa"></i>
<i class="l" style="left:922px;top:577px;width:8px;height:2px;background:#0000aa"></i>
<i class="l" style="left:938px;top:577px;width:24px;height:2px;background:#0000aa"></i>
<i class="l" style="left:970px;top:577px;width:8px;height:2px;background:#0000aa"></i>
<i class="l" style="left:986px;top:577px;width:8px;height:2px;background:#0000aa"></i>
<i class="l" style="left:1002px;top:577px;width:8px;height:2px;background:#0000aa"></i>
<i class="l" style="left:1018px;top:577px;width:8px;height:2px;background:#0000aa"></i>
<i class="l" style="left:1034px;top:577px;width:8px;height:2px;background:#0000aa"></i>
<i class="l" style="left:1050px;top:577px;width:8px;height:2px;background:#0000aa"></i>
<i class="l" style="left:1066px;top:577px;width:8px;height:2px;background:#0000aa"></i>
<i class="l" style="left:1082px;top:577px;width:8px;height:2px;background:#0000aa"></i>
<i class="l" style="left:1098px;top:577px;width:8px;height:2px;background:#0000aa"></i>
<i class="l" style="left:1114px;top:577px;width:8px;height:2px;background:#0000aa"></i>
<i class="l" style="left:1130px;top:577px;width:8px;height:2px;background:#0000aa"></i>
<i class="l" style="left:1146px;top:577px;width:8px;height:2px;background:#0000aa"></i>
<i class="l" style="left:1162px;top:577px;width:8px;height:2px;background:#0000aa"></i>
<i class="l" style="left:1178px;top:577px;width:8px;height:2px;background:#0000aa"></i>
<i class="l" style="left:1194px;top:577px;width:8px;height:2px;background:#0000aa"></i>
<i class="l" style="left:1210px;top:577px;width:8px;height:2px;background:#0000aa"></i>
<i class="l" style="left:1226px;top:577px;width:8px;height:2px;background:#0000aa"></i>
<i class="l" style="left:1242px;top:577px;width:8px;height:2px;background:#0000aa"></i>
<i class="l" style="left:1258px;top:577px;width:8px;height:2px;background:#0000aa"></i>
<i class="l" style="left:1274px;top:577px;width:8px;height:2px;background:#0000aa"></i>
<i class="l" style="left:1290px;top:577px;width:8px;height:2px;background:#0000aa"></i>
<i class="l" style="left:1306px;top:577px;width:8px;height:2px;background:#0000aa"></i>
<i class="l" style="left:1322px;top:577px;width:8px;height:2px;background:#0000aa"></i>
<i class="l" style="left:1338px;top:577px;width:8px;height:2px;background:#0000aa"></i>
<i class="l" style="left:1354px;top:577px;width:8px;height:2px;background:#0000aa"></i>
<i class="l" style="left:1370px;top:577px;width:24px;height:2px;background:#0000aa"></i>
<i class="l" style="left:1402px;top:577px;width:8px;height:2px;background:#0000aa"></i>
<i class="l" style="left:1418px;top:577px;width:24px;height:2px;background:#0000aa"></i>
<i class="l" style="left:1450px;top:577px;width:8px;height:2px;background:#0000aa"></i>
<i class="l" style="left:1466px;top:577px;width:24px;height:2px;background:#0000aa"></i>
<i class="l" style="left:1498px;top:577px;width:40px;height:2px;background:#0000aa"></i>
<i class="l" style="left:1546px;top:577px;width:8px;height:2px;background:#0000aa"></i>
<i class="l" style="left:1562px;top:577px;width:8px;height:2px;background:#0000aa"></i>
<i class="l" style="left:1578px;top:577px;width:8px;height:2px;background:#0000aa"></i>
<i class="l" style="left:1594px;top:577px;width:8px;height:2px;background:#0000aa"></i>
<i class="l" style="left:1610px;top:577px;width:8px;height:2px;background:#0000aa"></i>
<i class="l" style="left:1626px;top:577px;width:8px;height:2px;background:#0000aa"></i>
<i class="l" style="left:1642px;top:577px;width:8px;height:2px;background:#0000aa"></i>
<i class="l" style="left:1658px;top:577px;width:8px;height:2px;background:#0000aa"></i>
<i class="l" style="left:1674px;top:577px;width:8px;height:2px;background:#0000aa"></i>
<i class="l" style="left:1690px;top:577px;width:8px;height:2px;background:#0000aa"></i>
<i class="l" style="left:1706px;top:577px;width:8px;height:2px;background:#0000aa"></i>
<i class="l" style="left:1722px;top:577px;width:8px;height:2px;background:#0000aa"></i>
<i class="l" style="left:1738px;top:577px;width:8px;height:2px;background:#0000aa"></i>
<i class="l" style="left:1754px;top:577px;width:8px;height:2px;background:#0000aa"></i>
<i class="l" style="left:1770px;top:577px;width:8px;height:2px;background:#0000aa"></i>
<i class="l" style="left:1786px;top:577px;width:8px;height:2px;background:#0000aa"></i>
<i class="l" style="left:1802px;top:577px;width:8px;height:2px;background:#0000aa"></i>
<i class="l" style="left:1818px;top:577px;width:8px;height:2px;background:#0000aa"></i>
<i class="l" style="left:1834px;top:577px;width:8px;height:2px;background:#0000aa"></i>
<i class="l" style="left:1850px;top:577px;width:8px;height:2px;background:#0000aa"></i>
<i class="l" style="left:453px;top:594px;width:1410px;height:2px;background:#aaaaaa"></i>
<i class="l" style="left:453px;top:611px;width:37px;height:2px;background:#aaaaaa"></i>
<i class="l" style="left:522px;top:611px;width:189px;height:2px;background:#aaaaaa"></i>
<i class="l" style="left:717px;top:611px;width:37px;height:2px;background:#aaaaaa"></i>
<i class="l" style="left:866px;top:611px;width:88px;height:2px;background:#aaaaaa"></i>
<i class="l" style="left:1050px;top:611px;width:120px;height:2px;background:#aaaaaa"></i>
<i class="l" style="left:1242px;top:611px;width:144px;height:2px;background:#aaaaaa"></i>
<i class="l" style="left:1450px;top:611px;width:168px;height:2px;background:#aaaaaa"></i>
<i class="l" style="left:1746px;top:611px;width:117px;height:2px;background:#aaaaaa"></i>
<i class="l" style="left:722px;top:628px;width:712px;height:2px;background:#aa5500"></i>
<i class="l" style="left:1442px;top:628px;width:200px;height:2px;background:#aa5500"></i>
<i class="l" style="left:1650px;top:628px;width:208px;height:2px;background:#aa5500"></i>
<i class="l" style="left:722px;top:645px;width:136px;height:2px;background:#aa5500"></i>
<i class="l" style="left:866px;top:645px;width:104px;height:2px;background:#aa5500"></i>
<i class="l" style="left:978px;top:645px;width:88px;height:2px;background:#aa5500"></i>
<i class="l" style="left:1074px;top:645px;width:360px;height:2px;background:#aa5500"></i>
<i class="l" style="left:1442px;top:645px;width:120px;height:2px;background:#aa5500"></i>
<i class="l" style="left:1570px;top:645px;width:40px;height:2px;background:#aa5500"></i>
<i class="l" style="left:1618px;top:645px;width:24px;height:2px;background:#aa5500"></i>
<i class="l" style="left:1650px;top:645px;width:56px;height:2px;background:#aa5500"></i>
<i class="l" style="left:1714px;top:645px;width:88px;height:2px;background:#aa5500"></i>
<i class="l" style="left:1810px;top:645px;width:48px;height:2px;background:#aa5500"></i>
<i class="l" style="left:722px;top:662px;width:136px;height:2px;background:#aa5500"></i>
<i class="l" style="left:866px;top:662px;width:8px;height:2px;background:#aa5500"></i>
<i class="l" style="left:882px;top:662px;width:24px;height:2px;background:#aa5500"></i>
<i class="l" style="left:914px;top:662px;width:24px;height:2px;background:#aa5500"></i>
<i class="l" style="left:946px;top:662px;width:24px;height:2px;background:#aa5500"></i>
<i class="l" style="left:978px;top:662px;width:88px;height:2px;background:#aa5500"></i>
<i class="l" style="left:1074px;top:662px;width:72px;height:2px;background:#aa5500"></i>
<i class="l" style="left:1154px;top:662px;width:136px;height:2px;background:#aa5500"></i>
<i class="l" style="left:1298px;top:662px;width:120px;height:2px;background:#aa5500"></i>
<i class="l" style="left:1426px;top:662px;width:8px;height:2px;background:#aa5500"></i>
<i class="l" style="left:1442px;top:662px;width:40px;height:2px;background:#aa5500"></i>
<i class="l" style="left:1490px;top:662px;width:72px;height:2px;background:#aa5500"></i>
<i class="l" style="left:1570px;top:662px;width:40px;height:2px;background:#aa5500"></i>
<i class="l" style="left:1618px;top:662px;width:8px;height:2px;background:#aa5500"></i>
<i class="l" style="left:1634px;top:662px;width:8px;height:2px;background:#aa5500"></i>
<i class="l" style="left:1650px;top:662px;width:40px;height:2px;background:#aa5500"></i>
<i class="l" style="left:1698px;top:662px;width:8px;height:2px;background:#aa5500"></i>
<i class="l" style="left:1714px;top:662px;width:88px;height:2px;background:#aa5500"></i>
<i class="l" style="left:1810px;top:662px;width:48px;height:2px;background:#aa5500"></i>
<i class="l" style="left:722px;top:679px;width:8px;height:2px;background:#aa5500"></i>
<i class="l" style="left:738px;top:679px;width:120px;height:2px;background:#aa5500"></i>
<i class="l" style="left:866px;top:679px;width:8px;height:2px;background:#aa5500"></i>
<i class="l" style="left:882px;top:679px;width:24px;height:2px;background:#aa5500"></i>
<i class="l" style="left:914px;top:679px;width:8px;height:2px;background:#aa5500"></i>
<i class="l" style="left:930px;top:679px;width:8px;height:2px;background:#aa5500"></i>
<i class="l" style="left:946px;top:679px;width:24px;height:2px;background:#aa5500"></i>
<i class="l" style="left:978px;top:679px;width:88px;height:2px;background:#aa5500"></i>
<i class="l" style="left:1074px;top:679px;width:72px;height:2px;background:#aa5500"></i>
<i class="l" style="left:1154px;top:679px;width:8px;height:2px;background:#aa5500"></i>
<i class="l" style="left:1170px;top:679px;width:72px;height:2px;background:#aa5500"></i>
<i class="l" style="left:1250px;top:679px;width:40px;height:2px;background:#aa5500"></i>
<i class="l" style="left:1298px;top:679px;width:88px;height:2px;background:#aa5500"></i>
<i class="l" style="left:1394px;top:679px;width:8px;height:2px;background:#aa5500"></i>
<i class="l" style="left:1410px;top:679px;width:8px;height:2px;background:#aa5500"></i>
<i class="l" style="left:1426px;top:679px;width:8px;height:2px;background:#aa5500"></i>
<i class="l" style="left:1442px;top:679px;width:24px;height:2px;background:#aa5500"></i>
<i class="l" style="left:1474px;top:679px;width:8px;height:2px;background:#aa5500"></i>
<i class="l" style="left:1490px;top:679px;width:72px;height:2px;background:#aa5500"></i>
<i class="l" style="left:1570px;top:679px;width:40px;height:2px;background:#aa5500"></i>
<i class="l" style="left:1618px;top:679px;width:8px;height:2px;background:#aa5500"></i>
<i class="l" style="left:1634px;top:679px;width:8px;height:2px;background:#aa5500"></i>
<i class="l" style="left:1650px;top:679px;width:40px;height:2px;background:#aa5500"></i>
<i class="l" style="left:1698px;top:679px;width:8px;height:2px;background:#aa5500"></i>
<i class="l" style="left:1714px;top:679px;width:8px;height:2px;background:#aa5500"></i>
<i class="l" style="left:1730px;top:679px;width:72px;height:2px;background:#aa5500"></i>
<i class="l" style="left:1810px;top:679px;width:24px;height:2px;background:#aa5500"></i>
<i class="l" style="left:1842px;top:679px;width:16px;height:2px;background:#aa5500"></i>
<i class="l" style="left:722px;top:696px;width:8px;height:2px;background:#aa5500"></i>
<i class="l" style="left:738px;top:696px;width:8px;height:2px;background:#aa5500"></i>
<i class="l" style="left:754px;top:696px;width:56px;height:2px;background:#aa5500"></i>
<i class="l" style="left:818px;top:696px;width:8px;height:2px;background:#aa5500"></i>
<i class="l" style="left:834px;top:696px;width:24px;height:2px;background:#aa5500"></i>
<i class="l" style="left:866px;top:696px;width:8px;height:2px;background:#aa5500"></i>
<i class="l" style="left:882px;top:696px;width:24px;height:2px;background:#aa5500"></i>
<i class="l" style="left:914px;top:696px;width:8px;height:2px;background:#aa5500"></i>
<i class="l" style="left:930px;top:696px;width:8px;height:2px;background:#aa5500"></i>
<i class="l" style="left:946px;top:696px;width:24px;height:2px;background:#aa5500"></i>
<i class="l" style="left:978px;top:696px;width:40px;height:2px;background:#aa5500"></i>
<i class="l" style="left:1026px;top:696px;width:40px;height:2px;background:#aa5500"></i>
<i class="l" style="left:1074px;top:696px;width:72px;height:2px;background:#aa5500"></i>
<i class="l" style="left:1154px;top:696px;width:8px;height:2px;background:#aa5500"></i>
<i class="l" style="left:1170px;top:696px;width:56px;height:2px;background:#aa5500"></i>
<i class="l" style="left:1234px;top:696px;width:8px;height:2px;background:#aa5500"></i>
<i class="l" style="left:1250px;top:696px;width:40px;height:2px;background:#aa5500"></i>
<i class="l" style="left:1298px;top:696px;width:88px;height:2px;background:#aa5500"></i>
<i class="l" style="left:1394px;top:696px;width:8px;height:2px;background:#aa5500"></i>
<i class="l" style="left:1410px;top:696px;width:8px;height:2px;background:#aa5500"></i>
<i class="l" style="left:1426px;top:696px;width:8px;height:2px;background:#aa5500"></i>
<i class="l" style="left:1442px;top:696px;width:24px;height:2px;background:#aa5500"></i>
<i class="l" style="left:1474px;top:696px;width:8px;height:2px;background:#aa5500"></i>
<i class="l" style="left:1490px;top:696px;width:72px;height:2px;background:#aa5500"></i>
<i class="l" style="left:1570px;top:696px;width:40px;height:2px;background:#aa5500"></i>
<i class="l" style="left:1618px;top:696px;width:8px;height:2px;background:#aa5500"></i>
<i class="l" style="left:1634px;top:696px;width:8px;height:2px;background:#aa5500"></i>
<i class="l" style="left:1650px;top:696px;width:8px;height:2px;background:#aa5500"></i>
<i class="l" style="left:1666px;top:696px;width:24px;height:2px;background:#aa5500"></i>
<i class="l" style="left:1698px;top:696px;width:8px;height:2px;background:#aa5500"></i>
<i class="l" style="left:1714px;top:696px;width:8px;height:2px;background:#aa5500"></i>
<i class="l" style="left:1730px;top:696px;width:72px;height:2px;background:#aa5500"></i>
<i class="l" style="left:1810px;top:696px;width:24px;height:2px;background:#aa5500"></i>
<i class="l" style="left:1842px;top:696px;width:16px;height:2px;background:#aa5500"></i>
<i class="l" style="left:722px;top:713px;width:8px;height:2px;background:#aa5500"></i>
<i class="l" style="left:738px;top:713px;width:8px;height:2px;background:#aa5500"></i>
<i class="l" style="left:754px;top:713px;width:56px;height:2px;background:#aa5500"></i>
<i class="l" style="left:818px;top:713px;width:8px;height:2px;background:#aa5500"></i>
<i class="l" style="left:834px;top:713px;width:24px;height:2px;background:#aa5500"></i>
<i class="l" style="left:866px;top:713px;width:8px;height:2px;background:#aa5500"></i>
<i class="l" style="left:882px;top:713px;width:24px;height:2px;background:#aa5500"></i>
<i class="l" style="left:914px;top:713px;width:8px;height:2px;background:#aa5500"></i>
<i class="l" style="left:930px;top:713px;width:8px;height:2px;background:#aa5500"></i>
<i class="l" style="left:946px;top:713px;width:24px;height:2px;background:#aa5500"></i>
<i class="l" style="left:978px;top:713px;width:24px;height:2px;background:#aa5500"></i>
<i class="l" style="left:1010px;top:713px;width:8px;height:2px;background:#aa5500"></i>
<i class="l" style="left:1026px;top:713px;width:40px;height:2px;background:#aa5500"></i>
<i class="l" style="left:1074px;top:713px;width:56px;height:2px;background:#aa5500"></i>
<i class="l" style="left:1138px;top:713px;width:8px;height:2px;background:#aa5500"></i>
<i class="l" style="left:1154px;top:713px;width:8px;height:2px;background:#aa5500"></i>
<i class="l" style="left:1170px;top:713px;width:56px;height:2px;background:#aa5500"></i>
<i class="l" style="left:1234px;top:713px;width:8px;height:2px;background:#aa5500"></i>
<i class="l" style="left:1250px;top:713px;width:8px;height:2px;background:#aa5500"></i>
<i class="l" style="left:1266px;top:713px;width:24px;height:2px;background:#aa5500"></i>
<i class="l" style="left:1298px;top:713px;width:8px;height:2px;background:#aa5500"></i>
<i class="l" style="left:1314px;top:713px;width:24px;height:2px;background:#aa5500"></i>
<i class="l" style="left:1346px;top:713px;width:40px;height:2px;background:#aa5500"></i>
<i class="l" style="left:1394px;top:713px;width:8px;height:2px;background:#aa5500"></i>
<i class="l" style="left:1410px;top:713px;width:8px;height:2px;background:#aa5500"></i>
<i class="l" style="left:1426px;top:713px;width:8px;height:2px;background:#aa5500"></i>
<i class="l" style="left:1442px;top:713px;width:24px;height:2px;background:#aa5500"></i>
<i class="l" style="left:1474px;top:713px;width:8px;height:2px;background:#aa5500"></i>
<i class="l" style="left:1490px;top:713px;width:72px;height:2px;background:#aa5500"></i>
<i class="l" style="left:1570px;top:713px;width:40px;height:2px;background:#aa5500"></i>
<i class="l" style="left:1618px;top:713px;width:8px;height:2px;background:#aa5500"></i>
<i class="l" style="left:1634px;top:713px;width:8px;height:2px;background:#aa5500"></i>
<i class="l" style="left:1650px;top:713px;width:8px;height:2px;background:#aa5500"></i>
<i class="l" style="left:1666px;top:713px;width:8px;height:2px;background:#aa5500"></i>
<i class="l" style="left:1682px;top:713px;width:8px;height:2px;background:#aa5500"></i>
<i class="l" style="left:1698px;top:713px;width:8px;height:2px;background:#aa5500"></i>
<i class="l" style="left:1714px;top:713px;width:8px;height:2px;background:#aa5500"></i>
<i class="l" style="left:1730px;top:713px;width:24px;height:2px;background:#aa5500"></i>
<i class="l" style="left:1762px;top:713px;width:40px;height:2px;background:#aa5500"></i>
<i class="l" style="left:1810px;top:713px;width:24px;height:2px;background:#aa5500"></i>
<i class="l" style="left:1842px;top:713px;width:8px;height:2px;background:#aa5500"></i>
<i class="l" style="left:722px;top:730px;width:8px;height:2px;background:#aa5500"></i>
<i class="l" style="left:738px;top:730px;width:8px;height:2px;background:#aa5500"></i>
<i class="l" style="left:754px;top:730px;width:8px;height:2px;background:#aa5500"></i>
<i class="l" style="left:770px;top:730px;width:40px;height:2px;background:#aa5500"></i>
<i class="l" style="left:818px;top:730px;width:8px;height:2px;background:#aa5500"></i>
<i class="l" style="left:834px;top:730px;width:24px;height:2px;background:#aa5500"></i>
<i class="l" style="left:866px;top:730px;width:8px;height:2px;background:#aa5500"></i>
<i class="l" style="left:882px;top:730px;width:24px;height:2px;background:#aa5500"></i>
<i class="l" style="left:914px;top:730px;width:8px;height:2px;background:#aa5500"></i>
<i class="l" style="left:930px;top:730px;width:8px;height:2px;background:#aa5500"></i>
<i class="l" style="left:946px;top:730px;width:8px;height:2px;background:#aa5500"></i>
<i class="l" style="left:962px;top:730px;width:8px;height:2px;background:#aa5500"></i>
<i class="l" style="left:978px;top:730px;width:24px;height:2px;background:#aa5500"></i>
<i class="l" style="left:1010px;top:730px;width:8px;height:2px;background:#aa5500"></i>
<i class="l" style="left:1026px;top:730px;width:8px;height:2px;background:#aa5500"></i>
<i class="l" style="left:1042px;top:730px;width:8px;height:2px;background:#aa5500"></i>
<i class="l" style="left:1058px;top:730px;width:8px;height:2px;background:#aa5500"></i>
<i class="l" style="left:1074px;top:730px;width:24px;height:2px;background:#aa5500"></i>
<i class="l" style="left:1106px;top:730px;width:24px;height:2px;background:#aa5500"></i>
<i class="l" style="left:1138px;top:730px;width:8px;height:2px;background:#aa5500"></i>
<i class="l" style="left:1154px;top:730px;width:8px;height:2px;background:#aa5500"></i>
<i class="l" style="left:1170px;top:730px;width:24px;height:2px;background:#aa5500"></i>
<i class="l" style="left:1202px;top:730px;width:24px;height:2px;background:#aa5500"></i>
<i class="l" style="left:1234px;top:730px;width:8px;height:2px;background:#aa5500"></i>
<i class="l" style="left:1250px;top:730px;width:8px;height:2px;background:#aa5500"></i>
<i class="l" style="left:1266px;top:730px;width:24px;height:2px;background:#aa5500"></i>
<i class="l" style="left:1298px;top:730px;width:8px;height:2px;background:#aa5500"></i>
<i class="l" style="left:1314px;top:730px;width:24px;height:2px;background:#aa5500"></i>
<i class="l" style="left:1346px;top:730px;width:40px;height:2px;background:#aa5500"></i>
<i class="l" style="left:1394px;top:730px;width:8px;height:2px;background:#aa5500"></i>
<i class="l" style="left:1410px;top:730px;width:8px;height:2px;background:#aa5500"></i>
<i class="l" style="left:1426px;top:730px;width:8px;height:2px;background:#aa5500"></i>
<i class="l" style="left:1442px;top:730px;width:24px;height:2px;background:#aa5500"></i>
<i class="l" style="left:1474px;top:730px;width:8px;height:2px;background:#aa5500"></i>
<i class="l" style="left:1490px;top:730px;width:24px;height:2px;background:#aa5500"></i>
<i class="l" style="left:1522px;top:730px;width:8px;height:2px;background:#aa5500"></i>
<i class="l" style="left:1538px;top:730px;width:24px;height:2px;background:#aa5500"></i>
<i class="l" style="left:1570px;top:730px;width:40px;height:2px;background:#aa5500"></i>
<i class="l" style="left:1618px;top:730px;width:8px;height:2px;background:#aa5500"></i>
<i class="l" style="left:1634px;top:730px;width:8px;height:2px;background:#aa5500"></i>
<i class="l" style="left:1650px;top:730px;width:8px;height:2px;background:#aa5500"></i>
<i class="l" style="left:1666px;top:730px;width:8px;height:2px;background:#aa5500"></i>
<i class="l" style="left:1682px;top:730px;width:8px;height:2px;background:#aa5500"></i>
<i class="l" style="left:1698px;top:730px;width:8px;height:2px;background:#aa5500"></i>
<i class="l" style="left:1714px;top:730px;width:8px;height:2px;background:#aa5500"></i>
<i class="l" style="left:1730px;top:730px;width:8px;height:2px;background:#aa5500"></i>
<i class="l" style="left:1746px;top:730px;width:8px;height:2px;background:#aa5500"></i>
<i class="l" style="left:1762px;top:730px;width:40px;height:2px;background:#aa5500"></i>
<i class="l" style="left:1810px;top:730px;width:24px;height:2px;background:#aa5500"></i>
<i class="l" style="left:1842px;top:730px;width:8px;height:2px;background:#aa5500"></i>
<i class="l" style="left:722px;top:747px;width:8px;height:2px;background:#aa5500"></i>
<i class="l" style="left:738px;top:747px;width:8px;height:2px;background:#aa5500"></i>
<i class="l" style="left:754px;top:747px;width:8px;height:2px;background:#aa5500"></i>
<i class="l" style="left:770px;top:747px;width:8px;height:2px;background:#aa5500"></i>
<i class="l" style="left:786px;top:747px;width:24px;height:2px;background:#aa5500"></i>
<i class="l" style="left:818px;top:747px;width:8px;height:2px;background:#aa5500"></i>
<i class="l" style="left:834px;top:747px;width:24px;height:2px;background:#aa5500"></i>
<i class="l" style="left:866px;top:747px;width:8px;height:2px;background:#aa5500"></i>
<i class="l" style="left:882px;top:747px;width:24px;height:2px;background:#aa5500"></i>
<i class="l" style="left:914px;top:747px;width:8px;height:2px;background:#aa5500"></i>
<i class="l" style="left:930px;top:747px;width:8px;height:2px;background:#aa5500"></i>
<i class="l" style="left:946px;top:747px;width:8px;height:2px;background:#aa5500"></i>
<i class="l" style="left:962px;top:747px;width:8px;height:2px;background:#aa5500"></i>
<i class="l" style="left:978px;top:747px;width:8px;height:2px;background:#aa5500"></i>
<i class="l" style="left:994px;top:747px;width:8px;height:2px;background:#aa5500"></i>
<i class="l" style="left:1010px;top:747px;width:8px;height:2px;background:#aa5500"></i>
<i class="l" style="left:1026px;top:747px;width:8px;height:2px;background:#aa5500"></i>
<i class="l" style="left:1042px;top:747px;width:8px;height:2px;background:#aa5500"></i>
<i class="l" style="left:1058px;top:747px;width:8px;height:2px;background:#aa5500"></i>
<i class="l" style="left:1074px;top:747px;width:8px;height:2px;background:#aa5500"></i>
<i class="l" style="left:1090px;top:747px;width:8px;height:2px;background:#aa5500"></i>
<i class="l" style="left:1106px;top:747px;width:24px;height:2px;background:#aa5500"></i>
<i class="l" style="left:1138px;top:747px;width:8px;height:2px;background:#aa5500"></i>
<i class="l" style="left:1154px;top:747px;width:8px;height:2px;background:#aa5500"></i>
<i class="l" style="left:1170px;top:747px;width:24px;height:2px;background:#aa5500"></i>
<i class="l" style="left:1202px;top:747px;width:24px;height:2px;background:#aa5500"></i>
<i class="l" style="left:1234px;top:747px;width:8px;height:2px;background:#aa5500"></i>
<i class="l" style="left:1250px;top:747px;width:8px;height:2px;background:#aa5500"></i>
<i class="l" style="left:1266px;top:747px;width:8px;height:2px;background:#aa5500"></i>
<i class="l" style="left:1282px;top:747px;width:8px;height:2px;background:#aa5500"></i>
<i class="l" style="left:1298px;top:747px;width:8px;height:2px;background:#aa5500"></i>
<i class="l" style="left:1314px;top:747px;width:8px;height:2px;background:#aa5500"></i>
<i class="l" style="left:1330px;top:747px;width:8px;height:2px;background:#aa5500"></i>
<i class="l" style="left:1346px;top:747px;width:8px;height:2px;background:#aa5500"></i>
<i class="l" style="left:1362px;top:747px;width:24px;height:2px;background:#aa5500"></i>
<i class="l" style="left:1394px;top:747px;width:8px;height:2px;background:#aa5500"></i>
<i class="l" style="left:1410px;top:747px;width:8px;height:2px;background:#aa5500"></i>
<i class="l" style="left:1426px;top:747px;width:8px;height:2px;background:#aa5500"></i>
<i class="l" style="left:1442px;top:747px;width:8px;height:2px;background:#aa5500"></i>
<i class="l" style="left:1458px;top:747px;width:8px;height:2px;background:#aa5500"></i>
<i class="l" style="left:1474px;top:747px;width:8px;height:2px;background:#aa5500"></i>
<i class="l" style="left:1490px;top:747px;width:8px;height:2px;background:#aa5500"></i>
<i class="l" style="left:1506px;top:747px;width:8px;height:2px;background:#aa5500"></i>
<i class="l" style="left:1522px;top:747px;width:8px;height:2px;background:#aa5500"></i>
<i class="l" style="left:1538px;top:747px;width:8px;height:2px;background:#aa5500"></i>
<i class="l" style="left:1554px;top:747px;width:8px;height:2px;background:#aa5500"></i>
<i class="l" style="left:1570px;top:747px;width:40px;height:2px;background:#aa5500"></i>
<i class="l" style="left:1618px;top:747px;width:8px;height:2px;background:#aa5500"></i>
<i class="l" style="left:1634px;top:747px;width:8px;height:2px;background:#aa5500"></i>
<i class="l" style="left:1650px;top:747px;width:8px;height:2px;background:#aa5500"></i>
<i class="l" style="left:1666px;top:747px;width:8px;height:2px;background:#aa5500"></i>
<i class="l" style="left:1682px;top:747px;width:8px;height:2px;background:#aa5500"></i>
<i class="l" style="left:1698px;top:747px;width:8px;height:2px;background:#aa5500"></i>
<i class="l" style="left:1714px;top:747px;width:8px;height:2px;background:#aa5500"></i>
<i class="l" style="left:1730px;top:747px;width:8px;height:2px;background:#aa5500"></i>
<i class="l" style="left:1746px;top:747px;width:8px;height:2px;background:#aa5500"></i>
<i class="l" style="left:1762px;top:747px;width:40px;height:2px;background:#aa5500"></i>
<i class="l" style="left:1810px;top:747px;width:24px;height:2px;background:#aa5500"></i>
<i class="l" style="left:1842px;top:747px;width:8px;height:2px;background:#aa5500"></i>
<i class="l" style="left:722px;top:764px;width:8px;height:2px;background:#aa5500"></i>
<i class="l" style="left:738px;top:764px;width:8px;height:2px;background:#aa5500"></i>
<i class="l" style="left:754px;top:764px;width:8px;height:2px;background:#aa5500"></i>
<i class="l" style="left:770px;top:764px;width:8px;height:2px;background:#aa5500"></i>
<i class="l" style="left:786px;top:764px;width:24px;height:2px;background:#aa5500"></i>
<i class="l" style="left:818px;top:764px;width:8px;height:2px;background:#aa5500"></i>
<i class="l" style="left:834px;top:764px;width:8px;height:2px;background:#aa5500"></i>
<i class="l" style="left:850px;top:764px;width:8px;height:2px;background:#aa5500"></i>
<i class="l" style="left:866px;top:764px;width:8px;height:2px;background:#aa5500"></i>
<i class="l" style="left:882px;top:764px;width:24px;height:2px;background:#aa5500"></i>
<i class="l" style="left:914px;top:764px;width:8px;height:2px;background:#aa5500"></i>
<i class="l" style="left:930px;top:764px;width:8px;height:2px;background:#aa5500"></i>
<i class="l" style="left:946px;top:764px;width:8px;height:2px;background:#aa5500"></i>
<i class="l" style="left:962px;top:764px;width:8px;height:2px;background:#aa5500"></i>
<i class="l" style="left:978px;top:764px;width:8px;height:2px;background:#aa5500"></i>
<i class="l" style="left:994px;top:764px;width:8px;height:2px;background:#aa5500"></i>
<i class="l" style="left:1010px;top:764px;width:8px;height:2px;background:#aa5500"></i>
<i class="l" style="left:1026px;top:764px;width:8px;height:2px;background:#aa5500"></i>
<i class="l" style="left:1042px;top:764px;width:8px;height:2px;background:#aa5500"></i>
<i class="l" style="left:1058px;top:764px;width:8px;height:2px;background:#aa5500"></i>
<i class="l" style="left:1074px;top:764px;width:8px;height:2px;background:#aa5500"></i>
<i class="l" style="left:1090px;top:764px;width:8px;height:2px;background:#aa5500"></i>
<i class="l" style="left:1106px;top:764px;width:8px;height:2px;background:#aa5500"></i>
<i class="l" style="left:1122px;top:764px;width:8px;height:2px;background:#aa5500"></i>
<i class="l" style="left:1138px;top:764px;width:8px;height:2px;background:#aa5500"></i>
<i class="l" style="left:1154px;top:764px;width:8px;height:2px;background:#aa5500"></i>
<i class="l" style="left:1170px;top:764px;width:24px;height:2px;background:#aa5500"></i>
<i class="l" style="left:1202px;top:764px;width:8px;height:2px;background:#aa5500"></i>
<i class="l" style="left:1218px;top:764px;width:8px;height:2px;background:#aa5500"></i>
<i class="l" style="left:1234px;top:764px;width:8px;height:2px;background:#aa5500"></i>
<i class="l" style="left:1250px;top:764px;width:8px;height:2px;background:#aa5500"></i>
<i class="l" style="left:1266px;top:764px;width:8px;height:2px;background:#aa5500"></i>
<i class="l" style="left:1282px;top:764px;width:8px;height:2px;background:#aa5500"></i>
<i class="l" style="left:1298px;top:764px;width:8px;height:2px;background:#aa5500"></i>
<i class="l" style="left:1314px;top:764px;width:8px;height:2px;background:#aa5500"></i>
<i class="l" style="left:1330px;top:764px;width:8px;height:2px;background:#aa5500"></i>
<i class="l" style="left:1346px;top:764px;width:8px;height:2px;background:#aa5500"></i>
<i class="l" style="left:1362px;top:764px;width:8px;height:2px;background:#aa5500"></i>
<i class="l" style="left:1378px;top:764px;width:8px;height:2px;background:#aa5500"></i>
<i class="l" style="left:1394px;top:764px;width:8px;height:2px;background:#aa5500"></i>
<i class="l" style="left:1410px;top:764px;width:8px;height:2px;background:#aa5500"></i>
<i class="l" style="left:1426px;top:764px;width:8px;height:2px;background:#aa5500"></i>
<i class="l" style="left:1442px;top:764px;width:8px;height:2px;background:#aa5500"></i>
<i class="l" style="left:1458px;top:764px;width:8px;height:2px;background:#aa5500"></i>
<i class="l" style="left:1474px;top:764px;width:8px;height:2px;background:#aa5500"></i>
<i class="l" style="left:1490px;top:764px;width:8px;height:2px;background:#aa5500"></i>
<i class="l" style="left:1506px;top:764px;width:8px;height:2px;background:#aa5500"></i>
<i class="l" style="left:1522px;top:764px;width:8px;height:2px;background:#aa5500"></i>
<i class="l" style="left:1538px;top:764px;width:8px;height:2px;background:#aa5500"></i>
<i class="l" style="left:1554px;top:764px;width:8px;height:2px;background:#aa5500"></i>
<i class="l" style="left:1570px;top:764px;width:8px;height:2px;background:#aa5500"></i>
<i class="l" style="left:1586px;top:764px;width:24px;height:2px;background:#aa5500"></i>
<i class="l" style="left:1618px;top:764px;width:8px;height:2px;background:#aa5500"></i>
<i class="l" style="left:1634px;top:764px;width:8px;height:2px;background:#aa5500"></i>
<i class="l" style="left:1650px;top:764px;width:8px;height:2px;background:#aa5500"></i>
<i class="l" style="left:1666px;top:764px;width:8px;height:2px;background:#aa5500"></i>
<i class="l" style="left:1682px;top:764px;width:8px;height:2px;background:#aa5500"></i>
<i class="l" style="left:1698px;top:764px;width:8px;height:2px;background:#aa5500"></i>
<i class="l" style="left:1714px;top:764px;width:8px;height:2px;background:#aa5500"></i>
<i class="l" style="left:1730px;top:764px;width:8px;height:2px;background:#aa5500"></i>
<i class="l" style="left:1746px;top:764px;width:8px;height:2px;background:#aa5500"></i>
<i class="l" style="left:1762px;top:764px;width:8px;height:2px;background:#aa5500"></i>
<i class="l" style="left:1778px;top:764px;width:24px;height:2px;background:#aa5500"></i>
<i class="l" style="left:1810px;top:764px;width:24px;height:2px;background:#aa5500"></i>
<i class="l" style="left:1842px;top:764px;width:8px;height:2px;background:#aa5500"></i>
<i class="l" style="left:717px;top:781px;width:1146px;height:2px;background:#aaaaaa"></i>
<i class="l" style="left:845px;top:798px;width:37px;height:2px;background:#aaaaaa"></i>
<i class="l" style="left:946px;top:798px;width:877px;height:2px;background:#aaaaaa"></i>
<i class="l" style="left:1829px;top:798px;width:34px;height:2px;background:#aaaaaa"></i>
<i class="l" style="left:717px;top:832px;width:122px;height:2px;background:#aaaaaa"></i>
<i class="l" style="left:845px;top:832px;width:978px;height:2px;background:#aaaaaa"></i>
<i class="l" style="left:1829px;top:832px;width:34px;height:2px;background:#aaaaaa"></i>
<i class="l" style="left:845px;top:849px;width:37px;height:2px;background:#aaaaaa"></i>
<i class="l" style="left:994px;top:849px;width:565px;height:2px;background:#aaaaaa"></i>
<i class="l" style="left:1565px;top:849px;width:37px;height:2px;background:#aaaaaa"></i>
<i class="l" style="left:1706px;top:849px;width:157px;height:2px;background:#aaaaaa"></i>
<i class="l" style="left:21px;top:934px;width:426px;height:2px;background:#aaaaaa"></i>
<i class="l" style="left:453px;top:934px;width:258px;height:2px;background:#aaaaaa"></i>
<i class="l" style="left:717px;top:934px;width:122px;height:2px;background:#aaaaaa"></i>
<i class="l" style="left:845px;top:934px;width:714px;height:2px;background:#aaaaaa"></i>
<i class="l" style="left:1565px;top:934px;width:298px;height:2px;background:#aaaaaa"></i>
<i class="l" style="left:5px;top:951px;width:1874px;height:2px;background:#aaaaaa"></i>
<i class="l" style="left:5px;top:33px;width:2px;height:920px;background:#aaaaaa"></i>
<i class="l" style="left:21px;top:50px;width:2px;height:36px;background:#aaaaaa"></i>
<i class="l" style="left:21px;top:101px;width:2px;height:240px;background:#aaaaaa"></i>
<i class="l" style="left:21px;top:356px;width:2px;height:36px;background:#aaaaaa"></i>
<i class="l" style="left:21px;top:407px;width:2px;height:27px;background:#aaaaaa"></i>
<i class="l" style="left:21px;top:451px;width:2px;height:187px;background:#aaaaaa"></i>
<i class="l" style="left:21px;top:655px;width:2px;height:238px;background:#aaaaaa"></i>
<i class="l" style="left:21px;top:910px;width:2px;height:26px;background:#aaaaaa"></i>
<i class="l" style="left:29px;top:220px;width:2px;height:104px;background:#aaaaaa"></i>
<i class="l" style="left:37px;top:424px;width:2px;height:36px;background:#aaaaaa"></i>
<i class="l" style="left:45px;top:237px;width:2px;height:70px;background:#aaaaaa"></i>
<i class="l" style="left:69px;top:424px;width:2px;height:36px;background:#aaaaaa"></i>
<i class="l" style="left:77px;top:424px;width:2px;height:36px;background:#aaaaaa"></i>
<i class="l" style="left:85px;top:237px;width:2px;height:70px;background:#aaaaaa"></i>
<i class="l" style="left:109px;top:237px;width:2px;height:70px;background:#aaaaaa"></i>
<i class="l" style="left:109px;top:424px;width:2px;height:36px;background:#aaaaaa"></i>
<i class="l" style="left:117px;top:424px;width:2px;height:36px;background:#aaaaaa"></i>
<i class="l" style="left:149px;top:237px;width:2px;height:70px;background:#aaaaaa"></i>
<i class="l" style="left:149px;top:424px;width:2px;height:36px;background:#aaaaaa"></i>
<i class="l" style="left:157px;top:424px;width:2px;height:36px;background:#aaaaaa"></i>
<i class="l" style="left:173px;top:237px;width:2px;height:70px;background:#aaaaaa"></i>
<i class="l" style="left:189px;top:424px;width:2px;height:36px;background:#aaaaaa"></i>
<i class="l" style="left:197px;top:424px;width:2px;height:36px;background:#aaaaaa"></i>
<i class="l" style="left:213px;top:237px;width:2px;height:70px;background:#aaaaaa"></i>
<i class="l" style="left:229px;top:424px;width:2px;height:36px;background:#aaaaaa"></i>
<i class="l" style="left:237px;top:237px;width:2px;height:70px;background:#aaaaaa"></i>
<i class="l" style="left:277px;top:237px;width:2px;height:70px;background:#aaaaaa"></i>
<i class="l" style="left:293px;top:220px;width:2px;height:104px;background:#aaaaaa"></i>
<i class="l" style="left:301px;top:50px;width:2px;height:36px;background:#aaaaaa"></i>
<i class="l" style="left:301px;top:101px;width:2px;height:240px;background:#aaaaaa"></i>
<i class="l" style="left:309px;top:50px;width:2px;height:291px;background:#aaaaaa"></i>
<i class="l" style="left:445px;top:356px;width:2px;height:36px;background:#aaaaaa"></i>
<i class="l" style="left:445px;top:407px;width:2px;height:27px;background:#aaaaaa"></i>
<i class="l" style="left:445px;top:451px;width:2px;height:187px;background:#aaaaaa"></i>
<i class="l" style="left:445px;top:655px;width:2px;height:238px;background:#aaaaaa"></i>
<i class="l" style="left:445px;top:910px;width:2px;height:26px;background:#aaaaaa"></i>
<i class="l" style="left:453px;top:356px;width:2px;height:240px;background:#aaaaaa"></i>
<i class="l" style="left:453px;top:611px;width:2px;height:325px;background:#aaaaaa"></i>
<i class="l" style="left:469px;top:536px;width:2px;height:60px;background:#aaaaaa"></i>
<i class="l" style="left:485px;top:400px;width:2px;height:196px;background:#aaaaaa"></i>
<i class="l" style="left:501px;top:434px;width:2px;height:162px;background:#aaaaaa"></i>
<i class="l" style="left:533px;top:383px;width:2px;height:213px;background:#aaaaaa"></i>
<i class="l" style="left:549px;top:366px;width:2px;height:230px;background:#aaaaaa"></i>
<i class="l" style="left:565px;top:451px;width:2px;height:145px;background:#aaaaaa"></i>
<i class="l" style="left:597px;top:570px;width:2px;height:26px;background:#aaaaaa"></i>
<i class="l" style="left:613px;top:366px;width:2px;height:230px;background:#aaaaaa"></i>
<i class="l" style="left:629px;top:451px;width:2px;height:145px;background:#aaaaaa"></i>
<i class="l" style="left:645px;top:451px;width:2px;height:145px;background:#aaaaaa"></i>
<i class="l" style="left:661px;top:468px;width:2px;height:128px;background:#aaaaaa"></i>
<i class="l" style="left:677px;top:383px;width:2px;height:213px;background:#aaaaaa"></i>
<i class="l" style="left:693px;top:468px;width:2px;height:128px;background:#aaaaaa"></i>
<i class="l" style="left:709px;top:519px;width:2px;height:77px;background:#aaaaaa"></i>
<i class="l" style="left:709px;top:611px;width:2px;height:325px;background:#aaaaaa"></i>
<i class="l" style="left:717px;top:611px;width:2px;height:172px;background:#aaaaaa"></i>
<i class="l" style="left:717px;top:832px;width:2px;height:104px;background:#aaaaaa"></i>
<i class="l" style="left:725px;top:383px;width:2px;height:213px;background:#aaaaaa"></i>
<i class="l" style="left:733px;top:672px;width:2px;height:111px;background:#aaaaaa"></i>
<i class="l" style="left:741px;top:468px;width:2px;height:128px;background:#aaaaaa"></i>
<i class="l" style="left:749px;top:689px;width:2px;height:94px;background:#aaaaaa"></i>
<i class="l" style="left:757px;top:553px;width:2px;height:43px;background:#aaaaaa"></i>
<i class="l" style="left:765px;top:723px;width:2px;height:60px;background:#aaaaaa"></i>
<i class="l" style="left:773px;top:417px;width:2px;height:179px;background:#aaaaaa"></i>
<i class="l" style="left:781px;top:740px;width:2px;height:43px;background:#aaaaaa"></i>
<i class="l" style="left:789px;top:502px;width:2px;height:94px;background:#aaaaaa"></i>
<i class="l" style="left:805px;top:536px;width:2px;height:60px;background:#aaaaaa"></i>
<i class="l" style="left:813px;top:689px;width:2px;height:94px;background:#aaaaaa"></i>
<i class="l" style="left:821px;top:485px;width:2px;height:111px;background:#aaaaaa"></i>
<i class="l" style="left:829px;top:689px;width:2px;height:94px;background:#aaaaaa"></i>
<i class="l" style="left:837px;top:451px;width:2px;height:145px;background:#aaaaaa"></i>
<i class="l" style="left:837px;top:832px;width:2px;height:104px;background:#aaaaaa"></i>
<i class="l" style="left:845px;top:757px;width:2px;height:26px;background:#aaaaaa"></i>
<i class="l" style="left:845px;top:798px;width:2px;height:36px;background:#aaaaaa"></i>
<i class="l" style="left:845px;top:849px;width:2px;height:87px;background:#aaaaaa"></i>
<i class="l" style="left:853px;top:417px;width:2px;height:179px;background:#aaaaaa"></i>
<i class="l" style="left:861px;top:638px;width:2px;height:145px;background:#aaaaaa"></i>
<i class="l" style="left:877px;top:655px;width:2px;height:128px;background:#aaaaaa"></i>
<i class="l" style="left:885px;top:502px;width:2px;height:94px;background:#aaaaaa"></i>
<i class="l" style="left:901px;top:468px;width:2px;height:128px;background:#aaaaaa"></i>
<i class="l" style="left:909px;top:655px;width:2px;height:128px;background:#aaaaaa"></i>
<i class="l" style="left:917px;top:451px;width:2px;height:145px;background:#aaaaaa"></i>
<i class="l" style="left:925px;top:672px;width:2px;height:111px;background:#aaaaaa"></i>
<i class="l" style="left:933px;top:468px;width:2px;height:128px;background:#aaaaaa"></i>
<i class="l" style="left:941px;top:655px;width:2px;height:128px;background:#aaaaaa"></i>
<i class="l" style="left:957px;top:723px;width:2px;height:60px;background:#aaaaaa"></i>
<i class="l" style="left:965px;top:485px;width:2px;height:111px;background:#aaaaaa"></i>
<i class="l" style="left:973px;top:638px;width:2px;height:145px;background:#aaaaaa"></i>
<i class="l" style="left:981px;top:519px;width:2px;height:77px;background:#aaaaaa"></i>
<i class="l" style="left:989px;top:740px;width:2px;height:43px;background:#aaaaaa"></i>
<i class="l" style="left:997px;top:553px;width:2px;height:43px;background:#aaaaaa"></i>
<i class="l" style="left:1005px;top:706px;width:2px;height:77px;background:#aaaaaa"></i>
<i class="l" style="left:1013px;top:434px;width:2px;height:162px;background:#aaaaaa"></i>
<i class="l" style="left:1021px;top:689px;width:2px;height:94px;background:#aaaaaa"></i>
<i class="l" style="left:1029px;top:519px;width:2px;height:77px;background:#aaaaaa"></i>
<i class="l" style="left:1037px;top:723px;width:2px;height:60px;background:#aaaaaa"></i>
<i class="l" style="left:1045px;top:553px;width:2px;height:43px;background:#aaaaaa"></i>
<i class="l" style="left:1053px;top:723px;width:2px;height:60px;background:#aaaaaa"></i>
<i class="l" style="left:1061px;top:434px;width:2px;height:162px;background:#aaaaaa"></i>
<i class="l" style="left:1069px;top:638px;width:2px;height:145px;background:#aaaaaa"></i>
<i class="l" style="left:1077px;top:519px;width:2px;height:77px;background:#aaaaaa"></i>
<i class="l" style="left:1085px;top:740px;width:2px;height:43px;background:#aaaaaa"></i>
<i class="l" style="left:1093px;top:485px;width:2px;height:111px;background:#aaaaaa"></i>
<i class="l" style="left:1101px;top:723px;width:2px;height:60px;background:#aaaaaa"></i>
<i class="l" style="left:1109px;top:485px;width:2px;height:111px;background:#aaaaaa"></i>
<i class="l" style="left:1117px;top:757px;width:2px;height:26px;background:#aaaaaa"></i>
<i class="l" style="left:1125px;top:383px;width:2px;height:213px;background:#aaaaaa"></i>
<i class="l" style="left:1133px;top:706px;width:2px;height:77px;background:#aaaaaa"></i>
<i class="l" style="left:1141px;top:417px;width:2px;height:179px;background:#aaaaaa"></i>
<i class="l" style="left:1149px;top:655px;width:2px;height:128px;background:#aaaaaa"></i>
<i class="l" style="left:1157px;top:553px;width:2px;height:43px;background:#aaaaaa"></i>
<i class="l" style="left:1165px;top:672px;width:2px;height:111px;background:#aaaaaa"></i>
<i class="l" style="left:1173px;top:536px;width:2px;height:60px;background:#aaaaaa"></i>
<i class="l" style="left:1189px;top:519px;width:2px;height:77px;background:#aaaaaa"></i>
<i class="l" style="left:1197px;top:723px;width:2px;height:60px;background:#aaaaaa"></i>
<i class="l" style="left:1205px;top:468px;width:2px;height:128px;background:#aaaaaa"></i>
<i class="l" style="left:1213px;top:757px;width:2px;height:26px;background:#aaaaaa"></i>
<i class="l" style="left:1221px;top:434px;width:2px;height:162px;background:#aaaaaa"></i>
<i class="l" style="left:1229px;top:689px;width:2px;height:94px;background:#aaaaaa"></i>
<i class="l" style="left:1237px;top:553px;width:2px;height:43px;background:#aaaaaa"></i>
<i class="l" style="left:1245px;top:672px;width:2px;height:111px;background:#aaaaaa"></i>
<i class="l" style="left:1253px;top:383px;width:2px;height:213px;background:#aaaaaa"></i>
<i class="l" style="left:1261px;top:706px;width:2px;height:77px;background:#aaaaaa"></i>
<i class="l" style="left:1269px;top:485px;width:2px;height:111px;background:#aaaaaa"></i>
<i class="l" style="left:1277px;top:740px;width:2px;height:43px;background:#aaaaaa"></i>
<i class="l" style="left:1285px;top:383px;width:2px;height:213px;background:#aaaaaa"></i>
<i class="l" style="left:1293px;top:655px;width:2px;height:128px;background:#aaaaaa"></i>
<i class="l" style="left:1301px;top:536px;width:2px;height:60px;background:#aaaaaa"></i>
<i class="l" style="left:1309px;top:706px;width:2px;height:77px;background:#aaaaaa"></i>
<i class="l" style="left:1317px;top:400px;width:2px;height:196px;background:#aaaaaa"></i>
<i class="l" style="left:1325px;top:740px;width:2px;height:43px;background:#aaaaaa"></i>
<i class="l" style="left:1333px;top:570px;width:2px;height:26px;background:#aaaaaa"></i>
<i class="l" style="left:1341px;top:706px;width:2px;height:77px;background:#aaaaaa"></i>
<i class="l" style="left:1349px;top:536px;width:2px;height:60px;background:#aaaaaa"></i>
<i class="l" style="left:1357px;top:740px;width:2px;height:43px;background:#aaaaaa"></i>
<i class="l" style="left:1365px;top:502px;width:2px;height:94px;background:#aaaaaa"></i>
<i class="l" style="left:1373px;top:757px;width:2px;height:26px;background:#aaaaaa"></i>
<i class="l" style="left:1389px;top:672px;width:2px;height:111px;background:#aaaaaa"></i>
<i class="l" style="left:1397px;top:536px;width:2px;height:60px;background:#aaaaaa"></i>
<i class="l" style="left:1405px;top:672px;width:2px;height:111px;background:#aaaaaa"></i>
<i class="l" style="left:1413px;top:383px;width:2px;height:213px;background:#aaaaaa"></i>
<i class="l" style="left:1421px;top:655px;width:2px;height:128px;background:#aaaaaa"></i>
<i class="l" style="left:1437px;top:621px;width:2px;height:162px;background:#aaaaaa"></i>
<i class="l" style="left:1445px;top:451px;width:2px;height:145px;background:#aaaaaa"></i>
<i class="l" style="left:1453px;top:740px;width:2px;height:43px;background:#aaaaaa"></i>
<i class="l" style="left:1461px;top:434px;width:2px;height:162px;background:#aaaaaa"></i>
<i class="l" style="left:1469px;top:672px;width:2px;height:111px;background:#aaaaaa"></i>
<i class="l" style="left:1485px;top:655px;width:2px;height:128px;background:#aaaaaa"></i>
<i class="l" style="left:1493px;top:417px;width:2px;height:179px;background:#aaaaaa"></i>
<i class="l" style="left:1501px;top:740px;width:2px;height:43px;background:#aaaaaa"></i>
<i class="l" style="left:1517px;top:723px;width:2px;height:60px;background:#aaaaaa"></i>
<i class="l" style="left:1533px;top:723px;width:2px;height:60px;background:#aaaaaa"></i>
<i class="l" style="left:1541px;top:400px;width:2px;height:196px;background:#aaaaaa"></i>
<i class="l" style="left:1549px;top:740px;width:2px;height:43px;background:#aaaaaa"></i>
<i class="l" style="left:1557px;top:468px;width:2px;height:128px;background:#aaaaaa"></i>
<i class="l" style="left:1557px;top:849px;width:2px;height:87px;background:#aaaaaa"></i>
<i class="l" style="left:1565px;top:638px;width:2px;height:145px;background:#aaaaaa"></i>
<i class="l" style="left:1565px;top:849px;width:2px;height:87px;background:#aaaaaa"></i>
<i class="l" style="left:1573px;top:570px;width:2px;height:26px;background:#aaaaaa"></i>
<i class="l" style="left:1581px;top:757px;width:2px;height:26px;background:#aaaaaa"></i>
<i class="l" style="left:1589px;top:451px;width:2px;height:145px;background:#aaaaaa"></i>
<i class="l" style="left:1605px;top:553px;width:2px;height:43px;background:#aaaaaa"></i>
<i class="l" style="left:1613px;top:638px;width:2px;height:145px;background:#aaaaaa"></i>
<i class="l" style="left:1621px;top:485px;width:2px;height:111px;background:#aaaaaa"></i>
<i class="l" style="left:1629px;top:655px;width:2px;height:128px;background:#aaaaaa"></i>
<i class="l" style="left:1637px;top:434px;width:2px;height:162px;background:#aaaaaa"></i>
<i class="l" style="left:1645px;top:621px;width:2px;height:162px;background:#aaaaaa"></i>
<i class="l" style="left:1653px;top:519px;width:2px;height:77px;background:#aaaaaa"></i>
<i class="l" style="left:1661px;top:689px;width:2px;height:94px;background:#aaaaaa"></i>
<i class="l" style="left:1669px;top:451px;width:2px;height:145px;background:#aaaaaa"></i>
<i class="l" style="left:1677px;top:706px;width:2px;height:77px;background:#aaaaaa"></i>
<i class="l" style="left:1685px;top:485px;width:2px;height:111px;background:#aaaaaa"></i>
<i class="l" style="left:1693px;top:655px;width:2px;height:128px;background:#aaaaaa"></i>
<i class="l" style="left:1701px;top:485px;width:2px;height:111px;background:#aaaaaa"></i>
<i class="l" style="left:1709px;top:638px;width:2px;height:145px;background:#aaaaaa"></i>
<i class="l" style="left:1717px;top:417px;width:2px;height:179px;background:#aaaaaa"></i>
<i class="l" style="left:1725px;top:672px;width:2px;height:111px;background:#aaaaaa"></i>
<i class="l" style="left:1733px;top:519px;width:2px;height:77px;background:#aaaaaa"></i>
<i class="l" style="left:1741px;top:723px;width:2px;height:60px;background:#aaaaaa"></i>
<i class="l" style="left:1749px;top:536px;width:2px;height:60px;background:#aaaaaa"></i>
<i class="l" style="left:1757px;top:706px;width:2px;height:77px;background:#aaaaaa"></i>
<i class="l" style="left:1765px;top:519px;width:2px;height:77px;background:#aaaaaa"></i>
<i class="l" style="left:1773px;top:757px;width:2px;height:26px;background:#aaaaaa"></i>
<i class="l" style="left:1781px;top:502px;width:2px;height:94px;background:#aaaaaa"></i>
<i class="l" style="left:1797px;top:383px;width:2px;height:213px;background:#aaaaaa"></i>
<i class="l" style="left:1805px;top:638px;width:2px;height:145px;background:#aaaaaa"></i>
<i class="l" style="left:1813px;top:485px;width:2px;height:111px;background:#aaaaaa"></i>
<i class="l" style="left:1821px;top:798px;width:2px;height:36px;background:#aaaaaa"></i>
<i class="l" style="left:1829px;top:451px;width:2px;height:145px;background:#aaaaaa"></i>
<i class="l" style="left:1829px;top:798px;width:2px;height:36px;background:#aaaaaa"></i>
<i class="l" style="left:1837px;top:672px;width:2px;height:111px;background:#aaaaaa"></i>
<i class="l" style="left:1845px;top:468px;width:2px;height:128px;background:#aaaaaa"></i>
<i class="l" style="left:1853px;top:706px;width:2px;height:77px;background:#aaaaaa"></i>
<i class="l" style="left:1861px;top:50px;width:2px;height:291px;background:#aaaaaa"></i>
<i class="l" style="left:1861px;top:356px;width:2px;height:240px;background:#aaaaaa"></i>
<i class="l" style="left:1861px;top:611px;width:2px;height:172px;background:#aaaaaa"></i>
<i class="l" style="left:1861px;top:798px;width:2px;height:36px;background:#aaaaaa"></i>
<i class="l" style="left:1861px;top:849px;width:2px;height:87px;background:#aaaaaa"></i>
<i class="l" style="left:1877px;top:33px;width:2px;height:920px;background:#aaaaaa"></i>
<span class="t" style="left:42px;top:27px;color:#aaaaaa">| ASCii VMSS Dashboard - Version: 1.4 |</span>
<span class="t" style="left:410px;top:27px;color:#aaaaaa">PYTHON Version: 2x</span>
<span class="t" style="left:618px;top:27px;color:#aaaaaa">| Platform: Linux |</span>
<span class="t" style="left:1666px;top:27px;color:#aaaaaa">Window Size: (55, 235)</span>
<span class="t" style="left:66px;top:44px;color:#000000">STATUS</span>
<span class="t" style="left:34px;top:61px;color:#aaaaaa">Updated at 22:32:46</span>
<span class="t" style="left:234px;top:61px;color:#00aa00">OK</span>
<span class="t" style="left:314px;top:61px;color:#aaaaaa">2016-03-31 22:32:49,724 - INFO:Starting new HTTP connection (1): localhost</span>
<span class="t" style="left:314px;top:78px;color:#aaaaaa">2016-03-31 22:32:49,731 - INFO:INSIGHTS REQS: 94</span>
<span class="t" style="left:66px;top:95px;color:#000000">COMPUTE USAGE</span>
<span class="t" style="left:314px;top:95px;color:#aaaaaa">2016-03-31 22:32:49,739 - INFO:Starting new HTTP connection (1): localhost</span>
<span class="t" style="left:314px;top:112px;color:#aaaaaa">2016-03-31 22:32:49,743 - INFO:INSIGHTS RT: 88</span>
<span class="t b1" style="left:34px;top:129px;color:#ffffff">[Availability Sets]</span>
<span class="t" style="left:194px;top:129px;color:#ffffff">[</span>
<span class="t" style="left:202px;top:129px;color:#aaaaaa">0</span>
<span class="t" style="left:242px;top:129px;color:#ffffff">/</span>
<span class="t" style="left:250px;top:129px;color:#aa5500">2000</span>
<span class="t" style="left:290px;top:129px;color:#ffffff">]</span>
<span class="t" style="left:314px;top:129px;color:#aaaaaa">2016-03-31 22:32:50,761 - INFO:Starting new HTTP connection (1): localhost</span>
<span class="t b1" style="left:34px;top:146px;color:#ffffff">[ Regional  Cores ]</span>
<span class="t" style="left:194px;top:146px;color:#ffffff">[</span>
<span class="t" style="left:202px;top:146px;color:#aaaaaa">9</span>
<span class="t" style="left:242px;top:146px;color:#ffffff">/</span>
<span class="t" style="left:250px;top:146px;color:#aa5500">100</span>
<span class="t" style="left:290px;top:146px;color:#ffffff">]</span>
<span class="t" style="left:314px;top:146px;color:#aaaaaa">2016-03-31 22:32:50,769 - INFO:INSIGHTS REQS: 52</span>
<span class="t b1" style="left:34px;top:163px;color:#ffffff">[Virtual  Machines]</span>
<span class="t" style="left:194px;top:163px;color:#ffffff">[</span>
<span class="t" style="left:202px;top:163px;color:#aaaaaa">7</span>
<span class="t" style="left:242px;top:163px;color:#ffffff">/</span>
<span class="t" style="left:250px;top:163px;color:#aa5500">10000</span>
<span class="t" style="left:290px;top:163px;color:#ffffff">]</span>
<span class="t" style="left:314px;top:163px;color:#aaaaaa">2016-03-31 22:32:50,777 - INFO:Starting new HTTP connection (1): localhost</span>
<span class="t b1" style="left:34px;top:180px;color:#ffffff">[  VM Scale Sets  ]</span>
<span class="t" style="left:194px;top:180px;color:#ffffff">[</span>
<span class="t" style="left:202px;top:180px;color:#aaaaaa">1</span>
<span class="t" style="left:242px;top:180px;color:#ffffff">/</span>
<span class="t" style="left:250px;top:180px;color:#aa5500">50</span>
<span class="t" style="left:290px;top:180px;color:#ffffff">]</span>
<span class="t" style="left:314px;top:180px;color:#aaaaaa">2016-03-31 22:32:50,782 - INFO:INSIGHTS RT: 7</span>
<span class="t" style="left:314px;top:197px;color:#aaaaaa">2016-03-31 22:32:51,806 - INFO:Starting new HTTP connection (1): localhost</span>
<span class="t" style="left:314px;top:214px;color:#aaaaaa">2016-03-31 22:32:51,811 - INFO:INSIGHTS REQS: 68</span>
<span class="t" style="left:314px;top:231px;color:#aaaaaa">2016-03-31 22:32:51,820 - INFO:Starting new HTTP connection (1): localhost</span>
<span class="t" style="left:314px;top:248px;color:#aaaaaa">2016-03-31 22:32:51,825 - INFO:INSIGHTS RT: 71</span>
<span class="t" style="left:314px;top:265px;color:#aaaaaa">2016-03-31 22:32:52,851 - INFO:Starting new HTTP connection (1): localhost</span>
<span class="t" style="left:314px;top:282px;color:#aaaaaa">2016-03-31 22:32:52,855 - INFO:INSIGHTS REQS: 56</span>
<span class="t" style="left:314px;top:299px;color:#aaaaaa">2016-03-31 22:32:52,859 - INFO:Starting new HTTP connection (1): localhost</span>
<span class="t" style="left:58px;top:316px;color:#000000">AS</span>
<span class="t" style="left:122px;top:316px;color:#000000">RC</span>
<span class="t" style="left:186px;top:316px;color:#000000">VM</span>
<span class="t" style="left:250px;top:316px;color:#000000">SS</span>
<span class="t" style="left:314px;top:316px;color:#aaaaaa">2016-03-31 22:32:52,862 - INFO:INSIGHTS RT: 45</span>
<span class="t" style="left:66px;top:350px;color:#000000">VM UPDATE MONITOR</span>
<span class="t" style="left:498px;top:350px;color:#000000">INSIGHTS:</span>
<span class="t" style="left:578px;top:350px;color:#aaaaaa">REQS</span>
<span class="t" style="left:698px;top:350px;color:#aaaaaa">SAMPLE: 91</span>
<span class="t" style="left:914px;top:350px;color:#aaaaaa">MAX: 99</span>
<span class="t" style="left:1130px;top:350px;color:#aaaaaa">MIN: 1</span>
<span class="t" style="left:1362px;top:350px;color:#aaaaaa">LAST VALUE: 56</span>
<span class="t b1" style="left:34px;top:367px;color:#ffffff">Processing Virtual Machine:</span>
<span class="t" style="left:258px;top:367px;color:#aaaaaa">Done.</span>
<span class="t" style="left:42px;top:401px;color:#aaaaaa">1</span>
<span class="t" style="left:170px;top:401px;color:#000000">VIRTUAL MACHINES</span>
<span class="t" style="left:410px;top:401px;color:#aaaaaa">A</span>
<span class="t" style="left:18px;top:435px;color:#aaaaaa">1</span>
<span class="t b1" style="left:42px;top:435px;color:#55ff55">000  001  056  081  082</span>
<span class="t" style="left:442px;top:435px;color:#aaaaaa">1</span>
<span class="t" style="left:202px;top:452px;color:#aaaaaa">&lt; &gt;</span>
<span class="t" style="left:498px;top:605px;color:#000000">VM</span>
<span class="t" style="left:762px;top:605px;color:#000000">INSIGHTS:</span>
<span class="t" style="left:842px;top:605px;color:#aaaaaa">RT</span>
<span class="t" style="left:962px;top:605px;color:#aaaaaa">SAMPLE: 91</span>
<span class="t" style="left:1178px;top:605px;color:#aaaaaa">MAX: 97</span>
<span class="t" style="left:1394px;top:605px;color:#aaaaaa">MIN: 1</span>
<span class="t" style="left:1626px;top:605px;color:#aaaaaa">LAST VALUE: 45</span>
<span class="t" style="left:562px;top:622px;color:#000000">INSTANCE VIEW</span>
<span class="t" style="left:18px;top:639px;color:#aaaaaa">5</span>
<span class="t" style="left:442px;top:639px;color:#aaaaaa">5</span>
<span class="t b1" style="left:466px;top:639px;color:#ffffff">Instance ID..:</span>
<span class="t" style="left:586px;top:639px;color:#aaaaaa">82</span>
<span class="t b1" style="left:466px;top:656px;color:#ffffff">Hostname.....:</span>
<span class="t" style="left:586px;top:656px;color:#aaaaaa">vmssdash_82</span>
<span class="t b1" style="left:466px;top:673px;color:#ffffff">Prov. State..:</span>
<span class="t" style="left:586px;top:673px;color:#00aa00">Succeeded</span>
<span class="t b1" style="left:466px;top:690px;color:#ffffff">Prov. Date...:</span>
<span class="t" style="left:586px;top:690px;color:#aaaaaa">2016-03-26</span>
<span class="t b1" style="left:466px;top:707px;color:#ffffff">Prov. Time...:</span>
<span class="t" style="left:586px;top:707px;color:#aaaaaa">00:47:56</span>
<span class="t b1" style="left:466px;top:724px;color:#ffffff">Power State..:</span>
<span class="t" style="left:586px;top:724px;color:#00aa00">VM running</span>
<span class="t b1" style="left:466px;top:741px;color:#ffffff">Update Domain:</span>
<span class="t" style="left:586px;top:741px;color:#aaaaaa">4</span>
<span class="t b1" style="left:466px;top:758px;color:#ffffff">Fault Domain.:</span>
<span class="t" style="left:586px;top:758px;color:#aaaaaa">4</span>
<span class="t" style="left:562px;top:775px;color:#000000">NETWORK</span>
<span class="t b1" style="left:466px;top:792px;color:#ffffff">NIC.....:</span>
<span class="t" style="left:546px;top:792px;color:#aaaaaa">vmssdashnic</span>
<span class="t" style="left:890px;top:792px;color:#000000">PROMPT</span>
<span class="t b1" style="left:466px;top:809px;color:#ffffff">MAC.....:</span>
<span class="t" style="left:546px;top:809px;color:#aaaaaa">00-0D-3A-C0-12-A7</span>
<span class="t" style="left:754px;top:809px;color:#000000">AZURE</span>
<span class="t b1" style="left:866px;top:809px;color:#ffffff">&gt;</span>
<span class="t" style="left:882px;top:809px;color:#aaaaaa">select vm 82</span>
<span class="t b1" style="left:1842px;top:809px;color:#55ff55">E</span>
<span class="t b1" style="left:466px;top:826px;color:#ffffff">IP......:</span>
<span class="t" style="left:546px;top:826px;color:#aaaaaa">10.0.0.8</span>
<span class="t b1" style="left:466px;top:843px;color:#ffffff">Primary.:</span>
<span class="t" style="left:546px;top:843px;color:#aaaaaa">True</span>
<span class="t" style="left:890px;top:843px;color:#000000">GENERAL INFO</span>
<span class="t" style="left:1610px;top:843px;color:#000000">SYSTEM INFO</span>
<span class="t" style="left:562px;top:860px;color:#000000">VM Guest Agent</span>
<span class="t b1" style="left:1578px;top:860px;color:#ffffff">Operating System..:</span>
<span class="t" style="left:1738px;top:860px;color:#aaaaaa">UbuntuServer</span>
<span class="t b1" style="left:466px;top:877px;color:#ffffff">Version:</span>
<span class="t" style="left:538px;top:877px;color:#aaaaaa">2.1.2</span>
<span class="t b1" style="left:858px;top:877px;color:#ffffff">RG Name...:</span>
<span class="t" style="left:954px;top:877px;color:#aaaaaa">VMSSDASHBOARD</span>
<span class="t b1" style="left:1138px;top:877px;color:#ffffff">VMSS Name:</span>
<span class="t" style="left:1226px;top:877px;color:#aaaaaa">VMSSDASH</span>
<span class="t b1" style="left:1386px;top:877px;color:#ffffff">Tier..:</span>
<span class="t" style="left:1450px;top:877px;color:#aaaaaa">STANDARD</span>
<span class="t b1" style="left:1578px;top:877px;color:#ffffff">Version...........:</span>
<span class="t" style="left:1738px;top:877px;color:#aaaaaa">15.10</span>
<span class="t" style="left:18px;top:894px;color:#aaaaaa">A</span>
<span class="t" style="left:442px;top:894px;color:#aaaaaa">A</span>
<span class="t b1" style="left:466px;top:894px;color:#ffffff">Status.:</span>
<span class="t" style="left:538px;top:894px;color:#aaaaaa">Ready</span>
<span class="t b1" style="left:858px;top:894px;color:#ffffff">IP Address:</span>
<span class="t" style="left:954px;top:894px;color:#aaaaaa">104.41.44.116</span>
<span class="t b1" style="left:1074px;top:894px;color:#ffffff">Region:</span>
<span class="t" style="left:1138px;top:894px;color:#aaaaaa">BRAZILSOUTH</span>
<span class="t b1" style="left:1386px;top:894px;color:#ffffff">SKU...:</span>
<span class="t" style="left:1450px;top:894px;color:#aaaaaa">Standard_A1</span>
<span class="t b1" style="left:1578px;top:894px;color:#ffffff">Total VMs.........:</span>
<span class="t" style="left:1738px;top:894px;color:#aaaaaa">5</span>
<span class="t b1" style="left:466px;top:911px;color:#ffffff">State..:</span>
<span class="t" style="left:538px;top:911px;color:#00aa00">Agent is running</span>
<span class="t b1" style="left:858px;top:911px;color:#ffffff">DNS Name..:</span>
<span class="t" style="left:954px;top:911px;color:#aaaaaa">vmssdash.brazilsouth.cloudapp.azure.com</span>
<span class="t b1" style="left:1386px;top:911px;color:#ffffff">Capacity.:</span>
<span class="t" style="left:1474px;top:911px;color:#aaaaaa">5</span>
<span class="t b1" style="left:1578px;top:911px;color:#ffffff">Provisioning State:</span>
<span class="t" style="left:1738px;top:911px;color:#00aa00">Succeeded</span>
<div id="bb"></div>
</body></html>
